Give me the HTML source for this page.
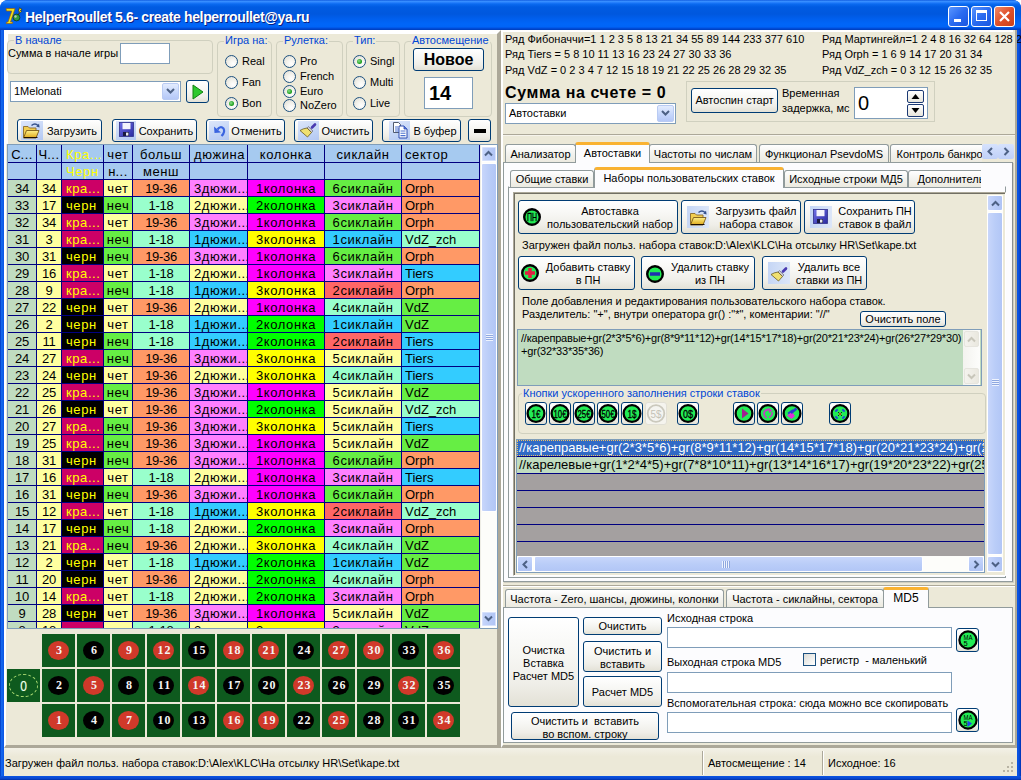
<!DOCTYPE html><html><head><meta charset="utf-8"><style>
*{box-sizing:border-box}
html,body{margin:0;padding:0}
body{width:1021px;height:780px;overflow:hidden;position:relative;background:#fff;font-family:"Liberation Sans",sans-serif;font-size:11px;color:#000}
.a{position:absolute}
.t{position:absolute;white-space:nowrap;line-height:13px}
.btn{position:absolute;border:1px solid #003C74;border-radius:3px;background:linear-gradient(#FFFFFF 0%,#F7F7F4 40%,#EFEEE8 75%,#E3E1D6 100%);text-align:center;white-space:nowrap;line-height:13px}
.edit{position:absolute;border:1px solid #7F9DB9;background:#fff}
.grp{position:absolute;border:1px solid #D0D0BF;border-radius:4px}
.gt{position:absolute;color:#0046D5;background:#ECE9D8;padding:0 1px;white-space:nowrap;line-height:13px}
.rad{position:absolute;width:13px;height:13px;border-radius:50%;border:1px solid #1C5180;background:radial-gradient(circle at 65% 70%,#fff 0%,#F4F3EE 40%,#DCDAD0 100%)}
.rad.on::after{content:"";position:absolute;left:3px;top:3px;width:5px;height:5px;border-radius:50%;background:radial-gradient(circle at 40% 40%,#8CE08C,#21A121 60%,#1A8A1A)}
.cell{position:absolute;overflow:hidden;white-space:nowrap;font-size:13px;line-height:16px;height:16px}
</style></head><body>
<div class="a" style="left:0;top:0;width:1021px;height:780px;background:#0A4FE0;border-radius:8px 8px 0 0"></div>
<div class="a" style="left:0;top:0;width:1021px;height:30px;border-radius:8px 8px 0 0;background:linear-gradient(#0048D8 0px,#3D95FF 1px,#2F86FF 2px,#0A6AF0 4px,#005BE2 7px,#0058DE 14px,#005FEE 19px,#0066F8 24px,#0064F6 27px,#0050E0 28px,#003CB8 30px)"></div>
<div class="a" style="left:0;top:30px;width:4px;height:750px;background:linear-gradient(90deg,#0036C0,#166AEE 40%,#0A55E4)"></div>
<div class="a" style="left:1017px;top:30px;width:4px;height:750px;background:linear-gradient(90deg,#0A55E4,#0A50DC 50%,#0030B0)"></div>
<div class="a" style="left:0;top:776px;width:1021px;height:4px;background:linear-gradient(#0A55E4,#0A48D0 60%,#0030A8)"></div>
<svg class="a" style="left:5px;top:7px" width="18" height="17" viewBox="0 0 18 17"><path d="M1 1.5h9l-0.5 1.8L5.5 15h2.2l-0.4 1.5H1.2l0.4-1.5h1.4L6.8 4H1.5z" fill="#F2E41A" stroke="#9A5A10" stroke-width="0.7"/><circle cx="11.5" cy="10.5" r="3.4" fill="#2E9A40" stroke="#0A2A14" stroke-width="0.7"/><circle cx="10.5" cy="9.5" r="1.2" fill="#B8C8B0"/><path d="M14.5 0.8l2.6 1.6-1.8 1 1.2 0.8-3.2 3.4 1.4-2.8-1.2-0.6z" fill="#F6EA20" stroke="#302000" stroke-width="0.6"/></svg>
<div class="t" style="left:25px;top:10px;font:bold 14px/15px 'Liberation Sans',sans-serif;letter-spacing:-0.35px;color:#fff;text-shadow:1px 1px 0 #0A1E80">HelperRoullet 5.6- create helperroullet@ya.ru</div>
<div class="a" style="left:948px;top:6px;width:21px;height:21px;border:1px solid #fff;border-radius:3px;background:linear-gradient(135deg,#5A96FF,#2A6BF0 50%,#1A56E0)">
<div class="a" style="left:5px;top:12px;width:7px;height:3px;background:#fff"></div>
</div>
<div class="a" style="left:971px;top:6px;width:21px;height:21px;border:1px solid #fff;border-radius:3px;background:linear-gradient(135deg,#5A96FF,#2A6BF0 50%,#1A56E0)">
<div class="a" style="left:4px;top:3px;width:11px;height:11px;border:1px solid #fff;border-top-width:3px"></div>
</div>
<div class="a" style="left:994px;top:6px;width:21px;height:21px;border:1px solid #fff;border-radius:3px;background:linear-gradient(135deg,#F08A6A,#E0502A 50%,#C8401A)">
<svg class="a" style="left:3px;top:3px" width="13" height="13"><path d="M2 2L11 11M11 2L2 11" stroke="#fff" stroke-width="2.2"/></svg>
</div>
<div class="a" style="left:4px;top:30px;width:1013px;height:746px;background:#ECE9D8"></div>
<div class="a" style="left:4px;top:30px;width:497px;height:718px;border-top:4px solid #fff;border-left:2px solid #fff;border-right:4px solid #ACA899;border-bottom:3px solid #ACA899"></div>
<div class="a" style="left:6px;top:34px;width:2px;height:110px;background:#fff"></div>
<div class="a" style="left:501px;top:30px;width:516px;height:718px;border-top:2px solid #fff;border-left:2px solid #fff;border-right:2px solid #ACA899;border-bottom:3px solid #ACA899"></div>
<div class="grp" style="left:7px;top:40px;width:206px;height:34px"></div>
<div class="gt" style="left:14px;top:34px">В начале</div>
<div class="t" style="left:8px;top:47px">Сумма в начале игры</div>
<div class="edit" style="left:120px;top:43px;width:50px;height:21px"></div>
<div class="edit" style="left:10px;top:81px;width:171px;height:21px">
<div class="t" style="left:3px;top:3px;font-size:11px">1Melonati</div>
<div class="a" style="right:1px;top:1px;width:17px;height:17px;border:1px solid #B9CBF3;border-radius:2px;background:linear-gradient(#E3ECFE,#C4D5FB 60%,#B5C8F7)"><svg class="a" style="left:3px;top:3px" width="9" height="8"><path d="M1 2L4.5 5.5L8 2" fill="none" stroke="#4D6185" stroke-width="2"/></svg></div>
</div>
<div class="btn" style="left:186px;top:80px;width:23px;height:23px"><svg class="a" style="left:5px;top:3px" width="12" height="16"><path d="M1 1L11 8L1 15Z" fill="#2DC82D" stroke="#108010" stroke-width="1"/></svg></div>
<div class="grp" style="left:217px;top:41px;width:55px;height:76px"></div>
<div class="gt" style="left:224px;top:34px">Игра на:</div>
<div class="rad" style="left:225px;top:55px"></div>
<div class="t" style="left:242px;top:55px">Real</div>
<div class="rad" style="left:225px;top:76px"></div>
<div class="t" style="left:242px;top:76px">Fan</div>
<div class="rad on" style="left:225px;top:97px"></div>
<div class="t" style="left:242px;top:97px">Bon</div>
<div class="grp" style="left:276px;top:41px;width:67px;height:76px"></div>
<div class="gt" style="left:283px;top:34px">Рулетка:</div>
<div class="rad" style="left:283px;top:55px"></div>
<div class="t" style="left:300px;top:55px">Pro</div>
<div class="rad" style="left:283px;top:70px"></div>
<div class="t" style="left:300px;top:70px">French</div>
<div class="rad on" style="left:283px;top:85px"></div>
<div class="t" style="left:300px;top:85px">Euro</div>
<div class="rad" style="left:283px;top:99px"></div>
<div class="t" style="left:300px;top:99px">NoZero</div>
<div class="grp" style="left:346px;top:41px;width:54px;height:76px"></div>
<div class="gt" style="left:353px;top:34px">Тип:</div>
<div class="rad on" style="left:353px;top:55px"></div>
<div class="t" style="left:370px;top:55px">Singl</div>
<div class="rad" style="left:353px;top:76px"></div>
<div class="t" style="left:370px;top:76px">Multi</div>
<div class="rad" style="left:353px;top:97px"></div>
<div class="t" style="left:370px;top:97px">Live</div>
<div class="grp" style="left:404px;top:41px;width:88px;height:76px"></div>
<div class="gt" style="left:411px;top:34px">Автосмещение</div>
<div class="btn" style="left:413px;top:48px;width:71px;height:23px;font:bold 16px/21px 'Liberation Sans',sans-serif">Новое</div>
<div class="edit" style="left:424px;top:77px;width:49px;height:32px"><div class="t" style="left:4px;top:5px;font:bold 20px/20px 'Liberation Sans',sans-serif">14</div></div>
<div class="btn" style="left:17px;top:119px;width:85px;height:23px">
<div class="a" style="left:3px;top:1px;width:22px;height:19px;background:linear-gradient(160deg,#DDE6FA,#C2D4F6 60%,#B4C8F2)"></div>
<svg class="a" style="left:3px;top:1px" width="20" height="18" viewBox="0 0 20 18"><defs><linearGradient id="fg" x1="0" y1="0" x2="0" y2="1"><stop offset="0" stop-color="#FDF08A"/><stop offset="1" stop-color="#E0A818"/></linearGradient></defs><path d="M2.5 5.5h4.5l1.5 1.5h6.5v9.5h-12.5z" fill="#F2CE50" stroke="#8A6A28" stroke-width="0.9"/><path d="M5.5 9.5h12.5l-3 7.5H2.5z" fill="url(#fg)" stroke="#7A5A18" stroke-width="0.9"/><path d="M16.5 16.5H3" stroke="#201000" stroke-width="1"/><path d="M10.5 4.5Q14 1.5 17 4.5" fill="none" stroke="#34508A" stroke-width="1.4"/><path d="M15.2 5.6L18.6 6.6L18 2.8z" fill="#34508A"/></svg>
<div class="t" style="left:26px;right:1px;text-align:center;top:5px">Загрузить</div>
</div>
<div class="btn" style="left:112px;top:119px;width:85px;height:23px">
<div class="a" style="left:3px;top:1px;width:20px;height:19px;background:linear-gradient(160deg,#DDE6FA,#C2D4F6 60%,#B4C8F2)"></div>
<svg class="a" style="left:5px;top:1px" width="18" height="18" viewBox="0 0 18 18"><defs><linearGradient id="flg" x1="0" y1="0" x2="1" y2="1"><stop offset="0" stop-color="#7070E8"/><stop offset="1" stop-color="#2A2AA0"/></linearGradient></defs><rect x="1.5" y="1.5" width="14" height="14" fill="url(#flg)" stroke="#30308A" stroke-width="0.8"/><rect x="4.5" y="2" width="8" height="6.2" fill="#F4F4FC"/><rect x="5" y="11" width="6" height="4" fill="#1A1A40"/><rect x="8" y="11.6" width="2.4" height="3" fill="#E8E8F0"/></svg>
<div class="t" style="left:24px;right:1px;text-align:center;top:5px">Сохранить</div>
</div>
<div class="btn" style="left:206px;top:119px;width:79px;height:23px">
<div class="a" style="left:2px;top:1px;width:20px;height:19px;background:linear-gradient(160deg,#DDE6FA,#C2D4F6 60%,#B4C8F2)"></div>
<svg class="a" style="left:4px;top:1px" width="18" height="18" viewBox="0 0 18 18"><path d="M6.5 8.5Q9.5 4.5 12.5 7.5Q14.5 11 10.5 15" fill="none" stroke="#3A64E0" stroke-width="2.2"/><path d="M3 5.5L3.5 12L10 11.5z" fill="#3A64E0"/></svg>
<div class="t" style="left:23px;right:1px;text-align:center;top:5px">Отменить</div>
</div>
<div class="btn" style="left:294px;top:119px;width:79px;height:23px">
<div class="a" style="left:3px;top:1px;width:21px;height:19px;background:linear-gradient(160deg,#DDE6FA,#C2D4F6 60%,#B4C8F2)"></div>
<svg class="a" style="left:3px;top:1px" width="20" height="18" viewBox="0 0 20 18"><path d="M14 6.5L17 3.5" stroke="#4A3AB0" stroke-width="2.6" stroke-linecap="round"/><path d="M10.5 5.5L15 10L13.5 11.5L9 7z" fill="#C8C8D0" stroke="#606070" stroke-width="0.6"/><path d="M9 7L13.5 11.5L9.5 16L2 9.5Q5 7.5 9 7z" fill="#F0E070" stroke="#6A5A20" stroke-width="0.8"/></svg>
<div class="t" style="left:25px;right:1px;text-align:center;top:5px">Очистить</div>
</div>
<div class="btn" style="left:382px;top:119px;width:79px;height:23px">
<div class="a" style="left:6px;top:1px;width:21px;height:19px;background:linear-gradient(160deg,#DDE6FA,#C2D4F6 60%,#B4C8F2)"></div>
<svg class="a" style="left:7px;top:1px" width="20" height="18" viewBox="0 0 20 18"><path d="M3.5 1.5h5l2 2v8h-7z" fill="#fff" stroke="#404A60" stroke-width="0.9"/><path d="M9 5h5l3 3v9H9z" fill="#fff" stroke="#2A4AB0" stroke-width="1"/><path d="M14 5v3h3" fill="#5A7AE0" stroke="#2A4AB0" stroke-width="0.8"/><path d="M5 6h3M5 8h4M5 10h4M10.5 10h5M10.5 12.3h5M10.5 14.6h5" stroke="#4A70D0" stroke-width="1.1"/></svg>
<div class="t" style="left:28px;right:1px;text-align:center;top:5px">В буфер</div>
</div>
<div class="btn" style="left:468px;top:119px;width:23px;height:23px"><div class="a" style="left:5px;top:9px;width:12px;height:4px;background:#000"></div></div>
<div class="a" style="left:7px;top:144px;width:491px;height:485px;border:1px solid #7F9DB9;background:#fff;overflow:hidden">
<div class="a" style="left:0;top:0;width:472px;height:484px;background:#000080"></div>
<div class="cell" style="left:0px;top:0px;width:28px;height:17px;background:#A6CAF0;color:#000;text-align:center;padding-top:2px;line-height:15px;letter-spacing:0px">С<span style="letter-spacing:0.5px">...</span></div>
<div class="cell" style="left:0px;top:18px;width:28px;height:16px;background:#A6CAF0;color:#000;text-align:center;padding-top:1px;line-height:15px;letter-spacing:0px"></div>
<div class="cell" style="left:29px;top:0px;width:24px;height:17px;background:#A6CAF0;color:#000;text-align:center;padding-top:2px;line-height:15px;letter-spacing:0px">Ч<span style="letter-spacing:0.5px">...</span></div>
<div class="cell" style="left:29px;top:18px;width:24px;height:16px;background:#A6CAF0;color:#000;text-align:center;padding-top:1px;line-height:15px;letter-spacing:0px"></div>
<div class="cell" style="left:54px;top:0px;width:41px;height:17px;background:#A6CAF0;color:#FFFF00;text-align:left;padding-left:4px;padding-top:2px;line-height:15px;letter-spacing:0.6px">Кра<span style="letter-spacing:0.5px">...</span></div>
<div class="cell" style="left:54px;top:18px;width:41px;height:16px;background:#A6CAF0;color:#FFFF00;text-align:left;padding-left:4px;padding-top:1px;line-height:15px;letter-spacing:0.6px">Черн</div>
<div class="cell" style="left:96px;top:0px;width:28px;height:17px;background:#A6CAF0;color:#000;text-align:center;padding-top:2px;line-height:15px;letter-spacing:0.6px">чет</div>
<div class="cell" style="left:96px;top:18px;width:28px;height:16px;background:#A6CAF0;color:#000;text-align:center;padding-top:1px;line-height:15px;letter-spacing:0px">н<span style="letter-spacing:0.5px">...</span></div>
<div class="cell" style="left:125px;top:0px;width:56px;height:17px;background:#A6CAF0;color:#000;text-align:center;padding-top:2px;line-height:15px;letter-spacing:0.6px">больш</div>
<div class="cell" style="left:125px;top:18px;width:56px;height:16px;background:#A6CAF0;color:#000;text-align:center;padding-top:1px;line-height:15px;letter-spacing:0.6px">менш</div>
<div class="cell" style="left:182px;top:0px;width:57px;height:17px;background:#A6CAF0;color:#000;text-align:left;padding-left:4px;padding-top:2px;line-height:15px;letter-spacing:0.6px">дюжина</div>
<div class="cell" style="left:182px;top:18px;width:57px;height:16px;background:#A6CAF0;color:#000;text-align:left;padding-left:4px;padding-top:1px;line-height:15px;letter-spacing:0px"></div>
<div class="cell" style="left:240px;top:0px;width:76px;height:17px;background:#A6CAF0;color:#000;text-align:center;padding-top:2px;line-height:15px;letter-spacing:0.6px">колонка</div>
<div class="cell" style="left:240px;top:18px;width:76px;height:16px;background:#A6CAF0;color:#000;text-align:center;padding-top:1px;line-height:15px;letter-spacing:0px"></div>
<div class="cell" style="left:317px;top:0px;width:76px;height:17px;background:#A6CAF0;color:#000;text-align:center;padding-top:2px;line-height:15px;letter-spacing:0.6px">сиклайн</div>
<div class="cell" style="left:317px;top:18px;width:76px;height:16px;background:#A6CAF0;color:#000;text-align:center;padding-top:1px;line-height:15px;letter-spacing:0px"></div>
<div class="cell" style="left:394px;top:0px;width:77px;height:17px;background:#A6CAF0;color:#000;text-align:left;padding-left:3px;padding-top:2px;line-height:15px;letter-spacing:0.6px">сектор</div>
<div class="cell" style="left:394px;top:18px;width:77px;height:16px;background:#A6CAF0;color:#000;text-align:left;padding-left:3px;padding-top:1px;line-height:15px;letter-spacing:0px"></div>
<div class="cell" style="left:0px;top:35px;width:28px;height:16px;background:#C0DCC0;color:#000;text-align:center;padding-top:1px;line-height:15px;letter-spacing:-0.3px">34</div>
<div class="cell" style="left:29px;top:35px;width:24px;height:16px;background:#FFFFA0;color:#000;text-align:center;padding-top:1px;line-height:15px;letter-spacing:-0.3px">34</div>
<div class="cell" style="left:54px;top:35px;width:41px;height:16px;background:#CC0066;color:#FFFF00;text-align:left;padding-left:4px;padding-top:1px;line-height:15px;letter-spacing:0.6px">кра<span style="letter-spacing:0.5px">...</span></div>
<div class="cell" style="left:96px;top:35px;width:28px;height:16px;background:#FFFFA0;color:#000;text-align:center;padding-top:1px;line-height:15px;letter-spacing:0.6px">чет</div>
<div class="cell" style="left:125px;top:35px;width:56px;height:16px;background:#FF9966;color:#000;text-align:center;padding-top:1px;line-height:15px;letter-spacing:-0.3px">19-36</div>
<div class="cell" style="left:182px;top:35px;width:57px;height:16px;background:#FF80FF;color:#000;text-align:left;padding-left:4px;padding-top:1px;line-height:15px;letter-spacing:0.6px">3дюжи<span style="letter-spacing:0.5px">...</span></div>
<div class="cell" style="left:240px;top:35px;width:76px;height:16px;background:#FF00FF;color:#000;text-align:center;padding-top:1px;line-height:15px;letter-spacing:0.6px">1колонка</div>
<div class="cell" style="left:317px;top:35px;width:76px;height:16px;background:#66EE44;color:#000;text-align:center;padding-top:1px;line-height:15px;letter-spacing:0.6px">6сиклайн</div>
<div class="cell" style="left:394px;top:35px;width:77px;height:16px;background:#FF9966;color:#000;text-align:left;padding-left:3px;padding-top:1px;line-height:15px;letter-spacing:0px">Orph</div>
<div class="cell" style="left:0px;top:52px;width:28px;height:16px;background:#C0DCC0;color:#000;text-align:center;padding-top:1px;line-height:15px;letter-spacing:-0.3px">33</div>
<div class="cell" style="left:29px;top:52px;width:24px;height:16px;background:#FFFFA0;color:#000;text-align:center;padding-top:1px;line-height:15px;letter-spacing:-0.3px">17</div>
<div class="cell" style="left:54px;top:52px;width:41px;height:16px;background:#000000;color:#FFFF00;text-align:left;padding-left:4px;padding-top:1px;line-height:15px;letter-spacing:0.6px">черн</div>
<div class="cell" style="left:96px;top:52px;width:28px;height:16px;background:#66EE44;color:#000;text-align:center;padding-top:1px;line-height:15px;letter-spacing:0.6px">неч</div>
<div class="cell" style="left:125px;top:52px;width:56px;height:16px;background:#99FFCC;color:#000;text-align:center;padding-top:1px;line-height:15px;letter-spacing:-0.3px">1-18</div>
<div class="cell" style="left:182px;top:52px;width:57px;height:16px;background:#FFFFA0;color:#000;text-align:left;padding-left:4px;padding-top:1px;line-height:15px;letter-spacing:0.6px">2дюжи<span style="letter-spacing:0.5px">...</span></div>
<div class="cell" style="left:240px;top:52px;width:76px;height:16px;background:#00FF00;color:#000;text-align:center;padding-top:1px;line-height:15px;letter-spacing:0.6px">2колонка</div>
<div class="cell" style="left:317px;top:52px;width:76px;height:16px;background:#FF80FF;color:#000;text-align:center;padding-top:1px;line-height:15px;letter-spacing:0.6px">3сиклайн</div>
<div class="cell" style="left:394px;top:52px;width:77px;height:16px;background:#FF9966;color:#000;text-align:left;padding-left:3px;padding-top:1px;line-height:15px;letter-spacing:0px">Orph</div>
<div class="cell" style="left:0px;top:69px;width:28px;height:16px;background:#C0DCC0;color:#000;text-align:center;padding-top:1px;line-height:15px;letter-spacing:-0.3px">32</div>
<div class="cell" style="left:29px;top:69px;width:24px;height:16px;background:#FFFFA0;color:#000;text-align:center;padding-top:1px;line-height:15px;letter-spacing:-0.3px">34</div>
<div class="cell" style="left:54px;top:69px;width:41px;height:16px;background:#CC0066;color:#FFFF00;text-align:left;padding-left:4px;padding-top:1px;line-height:15px;letter-spacing:0.6px">кра<span style="letter-spacing:0.5px">...</span></div>
<div class="cell" style="left:96px;top:69px;width:28px;height:16px;background:#FFFFA0;color:#000;text-align:center;padding-top:1px;line-height:15px;letter-spacing:0.6px">чет</div>
<div class="cell" style="left:125px;top:69px;width:56px;height:16px;background:#FF9966;color:#000;text-align:center;padding-top:1px;line-height:15px;letter-spacing:-0.3px">19-36</div>
<div class="cell" style="left:182px;top:69px;width:57px;height:16px;background:#FF80FF;color:#000;text-align:left;padding-left:4px;padding-top:1px;line-height:15px;letter-spacing:0.6px">3дюжи<span style="letter-spacing:0.5px">...</span></div>
<div class="cell" style="left:240px;top:69px;width:76px;height:16px;background:#FF00FF;color:#000;text-align:center;padding-top:1px;line-height:15px;letter-spacing:0.6px">1колонка</div>
<div class="cell" style="left:317px;top:69px;width:76px;height:16px;background:#66EE44;color:#000;text-align:center;padding-top:1px;line-height:15px;letter-spacing:0.6px">6сиклайн</div>
<div class="cell" style="left:394px;top:69px;width:77px;height:16px;background:#FF9966;color:#000;text-align:left;padding-left:3px;padding-top:1px;line-height:15px;letter-spacing:0px">Orph</div>
<div class="cell" style="left:0px;top:86px;width:28px;height:16px;background:#C0DCC0;color:#000;text-align:center;padding-top:1px;line-height:15px;letter-spacing:-0.3px">31</div>
<div class="cell" style="left:29px;top:86px;width:24px;height:16px;background:#FFFFA0;color:#000;text-align:center;padding-top:1px;line-height:15px;letter-spacing:-0.3px">3</div>
<div class="cell" style="left:54px;top:86px;width:41px;height:16px;background:#CC0066;color:#FFFF00;text-align:left;padding-left:4px;padding-top:1px;line-height:15px;letter-spacing:0.6px">кра<span style="letter-spacing:0.5px">...</span></div>
<div class="cell" style="left:96px;top:86px;width:28px;height:16px;background:#66EE44;color:#000;text-align:center;padding-top:1px;line-height:15px;letter-spacing:0.6px">неч</div>
<div class="cell" style="left:125px;top:86px;width:56px;height:16px;background:#99FFCC;color:#000;text-align:center;padding-top:1px;line-height:15px;letter-spacing:-0.3px">1-18</div>
<div class="cell" style="left:182px;top:86px;width:57px;height:16px;background:#33CCFF;color:#000;text-align:left;padding-left:4px;padding-top:1px;line-height:15px;letter-spacing:0.6px">1дюжи<span style="letter-spacing:0.5px">...</span></div>
<div class="cell" style="left:240px;top:86px;width:76px;height:16px;background:#FFFF00;color:#000;text-align:center;padding-top:1px;line-height:15px;letter-spacing:0.6px">3колонка</div>
<div class="cell" style="left:317px;top:86px;width:76px;height:16px;background:#33CCFF;color:#000;text-align:center;padding-top:1px;line-height:15px;letter-spacing:0.6px">1сиклайн</div>
<div class="cell" style="left:394px;top:86px;width:77px;height:16px;background:#99FFCC;color:#000;text-align:left;padding-left:3px;padding-top:1px;line-height:15px;letter-spacing:0px">VdZ_zch</div>
<div class="cell" style="left:0px;top:103px;width:28px;height:16px;background:#C0DCC0;color:#000;text-align:center;padding-top:1px;line-height:15px;letter-spacing:-0.3px">30</div>
<div class="cell" style="left:29px;top:103px;width:24px;height:16px;background:#FFFFA0;color:#000;text-align:center;padding-top:1px;line-height:15px;letter-spacing:-0.3px">31</div>
<div class="cell" style="left:54px;top:103px;width:41px;height:16px;background:#000000;color:#FFFF00;text-align:left;padding-left:4px;padding-top:1px;line-height:15px;letter-spacing:0.6px">черн</div>
<div class="cell" style="left:96px;top:103px;width:28px;height:16px;background:#66EE44;color:#000;text-align:center;padding-top:1px;line-height:15px;letter-spacing:0.6px">неч</div>
<div class="cell" style="left:125px;top:103px;width:56px;height:16px;background:#FF9966;color:#000;text-align:center;padding-top:1px;line-height:15px;letter-spacing:-0.3px">19-36</div>
<div class="cell" style="left:182px;top:103px;width:57px;height:16px;background:#FF80FF;color:#000;text-align:left;padding-left:4px;padding-top:1px;line-height:15px;letter-spacing:0.6px">3дюжи<span style="letter-spacing:0.5px">...</span></div>
<div class="cell" style="left:240px;top:103px;width:76px;height:16px;background:#FF00FF;color:#000;text-align:center;padding-top:1px;line-height:15px;letter-spacing:0.6px">1колонка</div>
<div class="cell" style="left:317px;top:103px;width:76px;height:16px;background:#66EE44;color:#000;text-align:center;padding-top:1px;line-height:15px;letter-spacing:0.6px">6сиклайн</div>
<div class="cell" style="left:394px;top:103px;width:77px;height:16px;background:#FF9966;color:#000;text-align:left;padding-left:3px;padding-top:1px;line-height:15px;letter-spacing:0px">Orph</div>
<div class="cell" style="left:0px;top:120px;width:28px;height:16px;background:#C0DCC0;color:#000;text-align:center;padding-top:1px;line-height:15px;letter-spacing:-0.3px">29</div>
<div class="cell" style="left:29px;top:120px;width:24px;height:16px;background:#FFFFA0;color:#000;text-align:center;padding-top:1px;line-height:15px;letter-spacing:-0.3px">16</div>
<div class="cell" style="left:54px;top:120px;width:41px;height:16px;background:#CC0066;color:#FFFF00;text-align:left;padding-left:4px;padding-top:1px;line-height:15px;letter-spacing:0.6px">кра<span style="letter-spacing:0.5px">...</span></div>
<div class="cell" style="left:96px;top:120px;width:28px;height:16px;background:#FFFFA0;color:#000;text-align:center;padding-top:1px;line-height:15px;letter-spacing:0.6px">чет</div>
<div class="cell" style="left:125px;top:120px;width:56px;height:16px;background:#99FFCC;color:#000;text-align:center;padding-top:1px;line-height:15px;letter-spacing:-0.3px">1-18</div>
<div class="cell" style="left:182px;top:120px;width:57px;height:16px;background:#FFFFA0;color:#000;text-align:left;padding-left:4px;padding-top:1px;line-height:15px;letter-spacing:0.6px">2дюжи<span style="letter-spacing:0.5px">...</span></div>
<div class="cell" style="left:240px;top:120px;width:76px;height:16px;background:#FF00FF;color:#000;text-align:center;padding-top:1px;line-height:15px;letter-spacing:0.6px">1колонка</div>
<div class="cell" style="left:317px;top:120px;width:76px;height:16px;background:#FF80FF;color:#000;text-align:center;padding-top:1px;line-height:15px;letter-spacing:0.6px">3сиклайн</div>
<div class="cell" style="left:394px;top:120px;width:77px;height:16px;background:#33CCFF;color:#000;text-align:left;padding-left:3px;padding-top:1px;line-height:15px;letter-spacing:0px">Tiers</div>
<div class="cell" style="left:0px;top:137px;width:28px;height:16px;background:#C0DCC0;color:#000;text-align:center;padding-top:1px;line-height:15px;letter-spacing:-0.3px">28</div>
<div class="cell" style="left:29px;top:137px;width:24px;height:16px;background:#FFFFA0;color:#000;text-align:center;padding-top:1px;line-height:15px;letter-spacing:-0.3px">9</div>
<div class="cell" style="left:54px;top:137px;width:41px;height:16px;background:#CC0066;color:#FFFF00;text-align:left;padding-left:4px;padding-top:1px;line-height:15px;letter-spacing:0.6px">кра<span style="letter-spacing:0.5px">...</span></div>
<div class="cell" style="left:96px;top:137px;width:28px;height:16px;background:#66EE44;color:#000;text-align:center;padding-top:1px;line-height:15px;letter-spacing:0.6px">неч</div>
<div class="cell" style="left:125px;top:137px;width:56px;height:16px;background:#99FFCC;color:#000;text-align:center;padding-top:1px;line-height:15px;letter-spacing:-0.3px">1-18</div>
<div class="cell" style="left:182px;top:137px;width:57px;height:16px;background:#33CCFF;color:#000;text-align:left;padding-left:4px;padding-top:1px;line-height:15px;letter-spacing:0.6px">1дюжи<span style="letter-spacing:0.5px">...</span></div>
<div class="cell" style="left:240px;top:137px;width:76px;height:16px;background:#FFFF00;color:#000;text-align:center;padding-top:1px;line-height:15px;letter-spacing:0.6px">3колонка</div>
<div class="cell" style="left:317px;top:137px;width:76px;height:16px;background:#FF6666;color:#000;text-align:center;padding-top:1px;line-height:15px;letter-spacing:0.6px">2сиклайн</div>
<div class="cell" style="left:394px;top:137px;width:77px;height:16px;background:#FF9966;color:#000;text-align:left;padding-left:3px;padding-top:1px;line-height:15px;letter-spacing:0px">Orph</div>
<div class="cell" style="left:0px;top:154px;width:28px;height:16px;background:#C0DCC0;color:#000;text-align:center;padding-top:1px;line-height:15px;letter-spacing:-0.3px">27</div>
<div class="cell" style="left:29px;top:154px;width:24px;height:16px;background:#FFFFA0;color:#000;text-align:center;padding-top:1px;line-height:15px;letter-spacing:-0.3px">22</div>
<div class="cell" style="left:54px;top:154px;width:41px;height:16px;background:#000000;color:#FFFF00;text-align:left;padding-left:4px;padding-top:1px;line-height:15px;letter-spacing:0.6px">черн</div>
<div class="cell" style="left:96px;top:154px;width:28px;height:16px;background:#FFFFA0;color:#000;text-align:center;padding-top:1px;line-height:15px;letter-spacing:0.6px">чет</div>
<div class="cell" style="left:125px;top:154px;width:56px;height:16px;background:#FF9966;color:#000;text-align:center;padding-top:1px;line-height:15px;letter-spacing:-0.3px">19-36</div>
<div class="cell" style="left:182px;top:154px;width:57px;height:16px;background:#FFFFA0;color:#000;text-align:left;padding-left:4px;padding-top:1px;line-height:15px;letter-spacing:0.6px">2дюжи<span style="letter-spacing:0.5px">...</span></div>
<div class="cell" style="left:240px;top:154px;width:76px;height:16px;background:#FF00FF;color:#000;text-align:center;padding-top:1px;line-height:15px;letter-spacing:0.6px">1колонка</div>
<div class="cell" style="left:317px;top:154px;width:76px;height:16px;background:#99FFCC;color:#000;text-align:center;padding-top:1px;line-height:15px;letter-spacing:0.6px">4сиклайн</div>
<div class="cell" style="left:394px;top:154px;width:77px;height:16px;background:#66EE44;color:#000;text-align:left;padding-left:3px;padding-top:1px;line-height:15px;letter-spacing:0px">VdZ</div>
<div class="cell" style="left:0px;top:171px;width:28px;height:16px;background:#C0DCC0;color:#000;text-align:center;padding-top:1px;line-height:15px;letter-spacing:-0.3px">26</div>
<div class="cell" style="left:29px;top:171px;width:24px;height:16px;background:#FFFFA0;color:#000;text-align:center;padding-top:1px;line-height:15px;letter-spacing:-0.3px">2</div>
<div class="cell" style="left:54px;top:171px;width:41px;height:16px;background:#000000;color:#FFFF00;text-align:left;padding-left:4px;padding-top:1px;line-height:15px;letter-spacing:0.6px">черн</div>
<div class="cell" style="left:96px;top:171px;width:28px;height:16px;background:#FFFFA0;color:#000;text-align:center;padding-top:1px;line-height:15px;letter-spacing:0.6px">чет</div>
<div class="cell" style="left:125px;top:171px;width:56px;height:16px;background:#99FFCC;color:#000;text-align:center;padding-top:1px;line-height:15px;letter-spacing:-0.3px">1-18</div>
<div class="cell" style="left:182px;top:171px;width:57px;height:16px;background:#33CCFF;color:#000;text-align:left;padding-left:4px;padding-top:1px;line-height:15px;letter-spacing:0.6px">1дюжи<span style="letter-spacing:0.5px">...</span></div>
<div class="cell" style="left:240px;top:171px;width:76px;height:16px;background:#00FF00;color:#000;text-align:center;padding-top:1px;line-height:15px;letter-spacing:0.6px">2колонка</div>
<div class="cell" style="left:317px;top:171px;width:76px;height:16px;background:#33CCFF;color:#000;text-align:center;padding-top:1px;line-height:15px;letter-spacing:0.6px">1сиклайн</div>
<div class="cell" style="left:394px;top:171px;width:77px;height:16px;background:#66EE44;color:#000;text-align:left;padding-left:3px;padding-top:1px;line-height:15px;letter-spacing:0px">VdZ</div>
<div class="cell" style="left:0px;top:188px;width:28px;height:16px;background:#C0DCC0;color:#000;text-align:center;padding-top:1px;line-height:15px;letter-spacing:-0.3px">25</div>
<div class="cell" style="left:29px;top:188px;width:24px;height:16px;background:#FFFFA0;color:#000;text-align:center;padding-top:1px;line-height:15px;letter-spacing:-0.3px">11</div>
<div class="cell" style="left:54px;top:188px;width:41px;height:16px;background:#000000;color:#FFFF00;text-align:left;padding-left:4px;padding-top:1px;line-height:15px;letter-spacing:0.6px">черн</div>
<div class="cell" style="left:96px;top:188px;width:28px;height:16px;background:#66EE44;color:#000;text-align:center;padding-top:1px;line-height:15px;letter-spacing:0.6px">неч</div>
<div class="cell" style="left:125px;top:188px;width:56px;height:16px;background:#99FFCC;color:#000;text-align:center;padding-top:1px;line-height:15px;letter-spacing:-0.3px">1-18</div>
<div class="cell" style="left:182px;top:188px;width:57px;height:16px;background:#33CCFF;color:#000;text-align:left;padding-left:4px;padding-top:1px;line-height:15px;letter-spacing:0.6px">1дюжи<span style="letter-spacing:0.5px">...</span></div>
<div class="cell" style="left:240px;top:188px;width:76px;height:16px;background:#00FF00;color:#000;text-align:center;padding-top:1px;line-height:15px;letter-spacing:0.6px">2колонка</div>
<div class="cell" style="left:317px;top:188px;width:76px;height:16px;background:#FF6666;color:#000;text-align:center;padding-top:1px;line-height:15px;letter-spacing:0.6px">2сиклайн</div>
<div class="cell" style="left:394px;top:188px;width:77px;height:16px;background:#33CCFF;color:#000;text-align:left;padding-left:3px;padding-top:1px;line-height:15px;letter-spacing:0px">Tiers</div>
<div class="cell" style="left:0px;top:205px;width:28px;height:16px;background:#C0DCC0;color:#000;text-align:center;padding-top:1px;line-height:15px;letter-spacing:-0.3px">24</div>
<div class="cell" style="left:29px;top:205px;width:24px;height:16px;background:#FFFFA0;color:#000;text-align:center;padding-top:1px;line-height:15px;letter-spacing:-0.3px">27</div>
<div class="cell" style="left:54px;top:205px;width:41px;height:16px;background:#CC0066;color:#FFFF00;text-align:left;padding-left:4px;padding-top:1px;line-height:15px;letter-spacing:0.6px">кра<span style="letter-spacing:0.5px">...</span></div>
<div class="cell" style="left:96px;top:205px;width:28px;height:16px;background:#66EE44;color:#000;text-align:center;padding-top:1px;line-height:15px;letter-spacing:0.6px">неч</div>
<div class="cell" style="left:125px;top:205px;width:56px;height:16px;background:#FF9966;color:#000;text-align:center;padding-top:1px;line-height:15px;letter-spacing:-0.3px">19-36</div>
<div class="cell" style="left:182px;top:205px;width:57px;height:16px;background:#FF80FF;color:#000;text-align:left;padding-left:4px;padding-top:1px;line-height:15px;letter-spacing:0.6px">3дюжи<span style="letter-spacing:0.5px">...</span></div>
<div class="cell" style="left:240px;top:205px;width:76px;height:16px;background:#FFFF00;color:#000;text-align:center;padding-top:1px;line-height:15px;letter-spacing:0.6px">3колонка</div>
<div class="cell" style="left:317px;top:205px;width:76px;height:16px;background:#FFFFA0;color:#000;text-align:center;padding-top:1px;line-height:15px;letter-spacing:0.6px">5сиклайн</div>
<div class="cell" style="left:394px;top:205px;width:77px;height:16px;background:#33CCFF;color:#000;text-align:left;padding-left:3px;padding-top:1px;line-height:15px;letter-spacing:0px">Tiers</div>
<div class="cell" style="left:0px;top:222px;width:28px;height:16px;background:#C0DCC0;color:#000;text-align:center;padding-top:1px;line-height:15px;letter-spacing:-0.3px">23</div>
<div class="cell" style="left:29px;top:222px;width:24px;height:16px;background:#FFFFA0;color:#000;text-align:center;padding-top:1px;line-height:15px;letter-spacing:-0.3px">24</div>
<div class="cell" style="left:54px;top:222px;width:41px;height:16px;background:#000000;color:#FFFF00;text-align:left;padding-left:4px;padding-top:1px;line-height:15px;letter-spacing:0.6px">черн</div>
<div class="cell" style="left:96px;top:222px;width:28px;height:16px;background:#FFFFA0;color:#000;text-align:center;padding-top:1px;line-height:15px;letter-spacing:0.6px">чет</div>
<div class="cell" style="left:125px;top:222px;width:56px;height:16px;background:#FF9966;color:#000;text-align:center;padding-top:1px;line-height:15px;letter-spacing:-0.3px">19-36</div>
<div class="cell" style="left:182px;top:222px;width:57px;height:16px;background:#FFFFA0;color:#000;text-align:left;padding-left:4px;padding-top:1px;line-height:15px;letter-spacing:0.6px">2дюжи<span style="letter-spacing:0.5px">...</span></div>
<div class="cell" style="left:240px;top:222px;width:76px;height:16px;background:#FFFF00;color:#000;text-align:center;padding-top:1px;line-height:15px;letter-spacing:0.6px">3колонка</div>
<div class="cell" style="left:317px;top:222px;width:76px;height:16px;background:#99FFCC;color:#000;text-align:center;padding-top:1px;line-height:15px;letter-spacing:0.6px">4сиклайн</div>
<div class="cell" style="left:394px;top:222px;width:77px;height:16px;background:#33CCFF;color:#000;text-align:left;padding-left:3px;padding-top:1px;line-height:15px;letter-spacing:0px">Tiers</div>
<div class="cell" style="left:0px;top:239px;width:28px;height:16px;background:#C0DCC0;color:#000;text-align:center;padding-top:1px;line-height:15px;letter-spacing:-0.3px">22</div>
<div class="cell" style="left:29px;top:239px;width:24px;height:16px;background:#FFFFA0;color:#000;text-align:center;padding-top:1px;line-height:15px;letter-spacing:-0.3px">25</div>
<div class="cell" style="left:54px;top:239px;width:41px;height:16px;background:#CC0066;color:#FFFF00;text-align:left;padding-left:4px;padding-top:1px;line-height:15px;letter-spacing:0.6px">кра<span style="letter-spacing:0.5px">...</span></div>
<div class="cell" style="left:96px;top:239px;width:28px;height:16px;background:#66EE44;color:#000;text-align:center;padding-top:1px;line-height:15px;letter-spacing:0.6px">неч</div>
<div class="cell" style="left:125px;top:239px;width:56px;height:16px;background:#FF9966;color:#000;text-align:center;padding-top:1px;line-height:15px;letter-spacing:-0.3px">19-36</div>
<div class="cell" style="left:182px;top:239px;width:57px;height:16px;background:#FF80FF;color:#000;text-align:left;padding-left:4px;padding-top:1px;line-height:15px;letter-spacing:0.6px">3дюжи<span style="letter-spacing:0.5px">...</span></div>
<div class="cell" style="left:240px;top:239px;width:76px;height:16px;background:#FF00FF;color:#000;text-align:center;padding-top:1px;line-height:15px;letter-spacing:0.6px">1колонка</div>
<div class="cell" style="left:317px;top:239px;width:76px;height:16px;background:#FFFFA0;color:#000;text-align:center;padding-top:1px;line-height:15px;letter-spacing:0.6px">5сиклайн</div>
<div class="cell" style="left:394px;top:239px;width:77px;height:16px;background:#66EE44;color:#000;text-align:left;padding-left:3px;padding-top:1px;line-height:15px;letter-spacing:0px">VdZ</div>
<div class="cell" style="left:0px;top:256px;width:28px;height:16px;background:#C0DCC0;color:#000;text-align:center;padding-top:1px;line-height:15px;letter-spacing:-0.3px">21</div>
<div class="cell" style="left:29px;top:256px;width:24px;height:16px;background:#FFFFA0;color:#000;text-align:center;padding-top:1px;line-height:15px;letter-spacing:-0.3px">26</div>
<div class="cell" style="left:54px;top:256px;width:41px;height:16px;background:#000000;color:#FFFF00;text-align:left;padding-left:4px;padding-top:1px;line-height:15px;letter-spacing:0.6px">черн</div>
<div class="cell" style="left:96px;top:256px;width:28px;height:16px;background:#FFFFA0;color:#000;text-align:center;padding-top:1px;line-height:15px;letter-spacing:0.6px">чет</div>
<div class="cell" style="left:125px;top:256px;width:56px;height:16px;background:#FF9966;color:#000;text-align:center;padding-top:1px;line-height:15px;letter-spacing:-0.3px">19-36</div>
<div class="cell" style="left:182px;top:256px;width:57px;height:16px;background:#FF80FF;color:#000;text-align:left;padding-left:4px;padding-top:1px;line-height:15px;letter-spacing:0.6px">3дюжи<span style="letter-spacing:0.5px">...</span></div>
<div class="cell" style="left:240px;top:256px;width:76px;height:16px;background:#00FF00;color:#000;text-align:center;padding-top:1px;line-height:15px;letter-spacing:0.6px">2колонка</div>
<div class="cell" style="left:317px;top:256px;width:76px;height:16px;background:#FFFFA0;color:#000;text-align:center;padding-top:1px;line-height:15px;letter-spacing:0.6px">5сиклайн</div>
<div class="cell" style="left:394px;top:256px;width:77px;height:16px;background:#99FFCC;color:#000;text-align:left;padding-left:3px;padding-top:1px;line-height:15px;letter-spacing:0px">VdZ_zch</div>
<div class="cell" style="left:0px;top:273px;width:28px;height:16px;background:#C0DCC0;color:#000;text-align:center;padding-top:1px;line-height:15px;letter-spacing:-0.3px">20</div>
<div class="cell" style="left:29px;top:273px;width:24px;height:16px;background:#FFFFA0;color:#000;text-align:center;padding-top:1px;line-height:15px;letter-spacing:-0.3px">27</div>
<div class="cell" style="left:54px;top:273px;width:41px;height:16px;background:#CC0066;color:#FFFF00;text-align:left;padding-left:4px;padding-top:1px;line-height:15px;letter-spacing:0.6px">кра<span style="letter-spacing:0.5px">...</span></div>
<div class="cell" style="left:96px;top:273px;width:28px;height:16px;background:#66EE44;color:#000;text-align:center;padding-top:1px;line-height:15px;letter-spacing:0.6px">неч</div>
<div class="cell" style="left:125px;top:273px;width:56px;height:16px;background:#FF9966;color:#000;text-align:center;padding-top:1px;line-height:15px;letter-spacing:-0.3px">19-36</div>
<div class="cell" style="left:182px;top:273px;width:57px;height:16px;background:#FF80FF;color:#000;text-align:left;padding-left:4px;padding-top:1px;line-height:15px;letter-spacing:0.6px">3дюжи<span style="letter-spacing:0.5px">...</span></div>
<div class="cell" style="left:240px;top:273px;width:76px;height:16px;background:#FFFF00;color:#000;text-align:center;padding-top:1px;line-height:15px;letter-spacing:0.6px">3колонка</div>
<div class="cell" style="left:317px;top:273px;width:76px;height:16px;background:#FFFFA0;color:#000;text-align:center;padding-top:1px;line-height:15px;letter-spacing:0.6px">5сиклайн</div>
<div class="cell" style="left:394px;top:273px;width:77px;height:16px;background:#33CCFF;color:#000;text-align:left;padding-left:3px;padding-top:1px;line-height:15px;letter-spacing:0px">Tiers</div>
<div class="cell" style="left:0px;top:290px;width:28px;height:16px;background:#C0DCC0;color:#000;text-align:center;padding-top:1px;line-height:15px;letter-spacing:-0.3px">19</div>
<div class="cell" style="left:29px;top:290px;width:24px;height:16px;background:#FFFFA0;color:#000;text-align:center;padding-top:1px;line-height:15px;letter-spacing:-0.3px">25</div>
<div class="cell" style="left:54px;top:290px;width:41px;height:16px;background:#CC0066;color:#FFFF00;text-align:left;padding-left:4px;padding-top:1px;line-height:15px;letter-spacing:0.6px">кра<span style="letter-spacing:0.5px">...</span></div>
<div class="cell" style="left:96px;top:290px;width:28px;height:16px;background:#66EE44;color:#000;text-align:center;padding-top:1px;line-height:15px;letter-spacing:0.6px">неч</div>
<div class="cell" style="left:125px;top:290px;width:56px;height:16px;background:#FF9966;color:#000;text-align:center;padding-top:1px;line-height:15px;letter-spacing:-0.3px">19-36</div>
<div class="cell" style="left:182px;top:290px;width:57px;height:16px;background:#FF80FF;color:#000;text-align:left;padding-left:4px;padding-top:1px;line-height:15px;letter-spacing:0.6px">3дюжи<span style="letter-spacing:0.5px">...</span></div>
<div class="cell" style="left:240px;top:290px;width:76px;height:16px;background:#FF00FF;color:#000;text-align:center;padding-top:1px;line-height:15px;letter-spacing:0.6px">1колонка</div>
<div class="cell" style="left:317px;top:290px;width:76px;height:16px;background:#FFFFA0;color:#000;text-align:center;padding-top:1px;line-height:15px;letter-spacing:0.6px">5сиклайн</div>
<div class="cell" style="left:394px;top:290px;width:77px;height:16px;background:#66EE44;color:#000;text-align:left;padding-left:3px;padding-top:1px;line-height:15px;letter-spacing:0px">VdZ</div>
<div class="cell" style="left:0px;top:307px;width:28px;height:16px;background:#C0DCC0;color:#000;text-align:center;padding-top:1px;line-height:15px;letter-spacing:-0.3px">18</div>
<div class="cell" style="left:29px;top:307px;width:24px;height:16px;background:#FFFFA0;color:#000;text-align:center;padding-top:1px;line-height:15px;letter-spacing:-0.3px">31</div>
<div class="cell" style="left:54px;top:307px;width:41px;height:16px;background:#000000;color:#FFFF00;text-align:left;padding-left:4px;padding-top:1px;line-height:15px;letter-spacing:0.6px">черн</div>
<div class="cell" style="left:96px;top:307px;width:28px;height:16px;background:#66EE44;color:#000;text-align:center;padding-top:1px;line-height:15px;letter-spacing:0.6px">неч</div>
<div class="cell" style="left:125px;top:307px;width:56px;height:16px;background:#FF9966;color:#000;text-align:center;padding-top:1px;line-height:15px;letter-spacing:-0.3px">19-36</div>
<div class="cell" style="left:182px;top:307px;width:57px;height:16px;background:#FF80FF;color:#000;text-align:left;padding-left:4px;padding-top:1px;line-height:15px;letter-spacing:0.6px">3дюжи<span style="letter-spacing:0.5px">...</span></div>
<div class="cell" style="left:240px;top:307px;width:76px;height:16px;background:#FF00FF;color:#000;text-align:center;padding-top:1px;line-height:15px;letter-spacing:0.6px">1колонка</div>
<div class="cell" style="left:317px;top:307px;width:76px;height:16px;background:#66EE44;color:#000;text-align:center;padding-top:1px;line-height:15px;letter-spacing:0.6px">6сиклайн</div>
<div class="cell" style="left:394px;top:307px;width:77px;height:16px;background:#FF9966;color:#000;text-align:left;padding-left:3px;padding-top:1px;line-height:15px;letter-spacing:0px">Orph</div>
<div class="cell" style="left:0px;top:324px;width:28px;height:16px;background:#C0DCC0;color:#000;text-align:center;padding-top:1px;line-height:15px;letter-spacing:-0.3px">17</div>
<div class="cell" style="left:29px;top:324px;width:24px;height:16px;background:#FFFFA0;color:#000;text-align:center;padding-top:1px;line-height:15px;letter-spacing:-0.3px">16</div>
<div class="cell" style="left:54px;top:324px;width:41px;height:16px;background:#CC0066;color:#FFFF00;text-align:left;padding-left:4px;padding-top:1px;line-height:15px;letter-spacing:0.6px">кра<span style="letter-spacing:0.5px">...</span></div>
<div class="cell" style="left:96px;top:324px;width:28px;height:16px;background:#FFFFA0;color:#000;text-align:center;padding-top:1px;line-height:15px;letter-spacing:0.6px">чет</div>
<div class="cell" style="left:125px;top:324px;width:56px;height:16px;background:#99FFCC;color:#000;text-align:center;padding-top:1px;line-height:15px;letter-spacing:-0.3px">1-18</div>
<div class="cell" style="left:182px;top:324px;width:57px;height:16px;background:#FFFFA0;color:#000;text-align:left;padding-left:4px;padding-top:1px;line-height:15px;letter-spacing:0.6px">2дюжи<span style="letter-spacing:0.5px">...</span></div>
<div class="cell" style="left:240px;top:324px;width:76px;height:16px;background:#FF00FF;color:#000;text-align:center;padding-top:1px;line-height:15px;letter-spacing:0.6px">1колонка</div>
<div class="cell" style="left:317px;top:324px;width:76px;height:16px;background:#FF80FF;color:#000;text-align:center;padding-top:1px;line-height:15px;letter-spacing:0.6px">3сиклайн</div>
<div class="cell" style="left:394px;top:324px;width:77px;height:16px;background:#33CCFF;color:#000;text-align:left;padding-left:3px;padding-top:1px;line-height:15px;letter-spacing:0px">Tiers</div>
<div class="cell" style="left:0px;top:341px;width:28px;height:16px;background:#C0DCC0;color:#000;text-align:center;padding-top:1px;line-height:15px;letter-spacing:-0.3px">16</div>
<div class="cell" style="left:29px;top:341px;width:24px;height:16px;background:#FFFFA0;color:#000;text-align:center;padding-top:1px;line-height:15px;letter-spacing:-0.3px">31</div>
<div class="cell" style="left:54px;top:341px;width:41px;height:16px;background:#000000;color:#FFFF00;text-align:left;padding-left:4px;padding-top:1px;line-height:15px;letter-spacing:0.6px">черн</div>
<div class="cell" style="left:96px;top:341px;width:28px;height:16px;background:#66EE44;color:#000;text-align:center;padding-top:1px;line-height:15px;letter-spacing:0.6px">неч</div>
<div class="cell" style="left:125px;top:341px;width:56px;height:16px;background:#FF9966;color:#000;text-align:center;padding-top:1px;line-height:15px;letter-spacing:-0.3px">19-36</div>
<div class="cell" style="left:182px;top:341px;width:57px;height:16px;background:#FF80FF;color:#000;text-align:left;padding-left:4px;padding-top:1px;line-height:15px;letter-spacing:0.6px">3дюжи<span style="letter-spacing:0.5px">...</span></div>
<div class="cell" style="left:240px;top:341px;width:76px;height:16px;background:#FF00FF;color:#000;text-align:center;padding-top:1px;line-height:15px;letter-spacing:0.6px">1колонка</div>
<div class="cell" style="left:317px;top:341px;width:76px;height:16px;background:#66EE44;color:#000;text-align:center;padding-top:1px;line-height:15px;letter-spacing:0.6px">6сиклайн</div>
<div class="cell" style="left:394px;top:341px;width:77px;height:16px;background:#FF9966;color:#000;text-align:left;padding-left:3px;padding-top:1px;line-height:15px;letter-spacing:0px">Orph</div>
<div class="cell" style="left:0px;top:358px;width:28px;height:16px;background:#C0DCC0;color:#000;text-align:center;padding-top:1px;line-height:15px;letter-spacing:-0.3px">15</div>
<div class="cell" style="left:29px;top:358px;width:24px;height:16px;background:#FFFFA0;color:#000;text-align:center;padding-top:1px;line-height:15px;letter-spacing:-0.3px">12</div>
<div class="cell" style="left:54px;top:358px;width:41px;height:16px;background:#CC0066;color:#FFFF00;text-align:left;padding-left:4px;padding-top:1px;line-height:15px;letter-spacing:0.6px">кра<span style="letter-spacing:0.5px">...</span></div>
<div class="cell" style="left:96px;top:358px;width:28px;height:16px;background:#FFFFA0;color:#000;text-align:center;padding-top:1px;line-height:15px;letter-spacing:0.6px">чет</div>
<div class="cell" style="left:125px;top:358px;width:56px;height:16px;background:#99FFCC;color:#000;text-align:center;padding-top:1px;line-height:15px;letter-spacing:-0.3px">1-18</div>
<div class="cell" style="left:182px;top:358px;width:57px;height:16px;background:#33CCFF;color:#000;text-align:left;padding-left:4px;padding-top:1px;line-height:15px;letter-spacing:0.6px">1дюжи<span style="letter-spacing:0.5px">...</span></div>
<div class="cell" style="left:240px;top:358px;width:76px;height:16px;background:#FFFF00;color:#000;text-align:center;padding-top:1px;line-height:15px;letter-spacing:0.6px">3колонка</div>
<div class="cell" style="left:317px;top:358px;width:76px;height:16px;background:#FF6666;color:#000;text-align:center;padding-top:1px;line-height:15px;letter-spacing:0.6px">2сиклайн</div>
<div class="cell" style="left:394px;top:358px;width:77px;height:16px;background:#99FFCC;color:#000;text-align:left;padding-left:3px;padding-top:1px;line-height:15px;letter-spacing:0px">VdZ_zch</div>
<div class="cell" style="left:0px;top:375px;width:28px;height:16px;background:#C0DCC0;color:#000;text-align:center;padding-top:1px;line-height:15px;letter-spacing:-0.3px">14</div>
<div class="cell" style="left:29px;top:375px;width:24px;height:16px;background:#FFFFA0;color:#000;text-align:center;padding-top:1px;line-height:15px;letter-spacing:-0.3px">17</div>
<div class="cell" style="left:54px;top:375px;width:41px;height:16px;background:#000000;color:#FFFF00;text-align:left;padding-left:4px;padding-top:1px;line-height:15px;letter-spacing:0.6px">черн</div>
<div class="cell" style="left:96px;top:375px;width:28px;height:16px;background:#66EE44;color:#000;text-align:center;padding-top:1px;line-height:15px;letter-spacing:0.6px">неч</div>
<div class="cell" style="left:125px;top:375px;width:56px;height:16px;background:#99FFCC;color:#000;text-align:center;padding-top:1px;line-height:15px;letter-spacing:-0.3px">1-18</div>
<div class="cell" style="left:182px;top:375px;width:57px;height:16px;background:#FFFFA0;color:#000;text-align:left;padding-left:4px;padding-top:1px;line-height:15px;letter-spacing:0.6px">2дюжи<span style="letter-spacing:0.5px">...</span></div>
<div class="cell" style="left:240px;top:375px;width:76px;height:16px;background:#00FF00;color:#000;text-align:center;padding-top:1px;line-height:15px;letter-spacing:0.6px">2колонка</div>
<div class="cell" style="left:317px;top:375px;width:76px;height:16px;background:#FF80FF;color:#000;text-align:center;padding-top:1px;line-height:15px;letter-spacing:0.6px">3сиклайн</div>
<div class="cell" style="left:394px;top:375px;width:77px;height:16px;background:#FF9966;color:#000;text-align:left;padding-left:3px;padding-top:1px;line-height:15px;letter-spacing:0px">Orph</div>
<div class="cell" style="left:0px;top:392px;width:28px;height:16px;background:#C0DCC0;color:#000;text-align:center;padding-top:1px;line-height:15px;letter-spacing:-0.3px">13</div>
<div class="cell" style="left:29px;top:392px;width:24px;height:16px;background:#FFFFA0;color:#000;text-align:center;padding-top:1px;line-height:15px;letter-spacing:-0.3px">21</div>
<div class="cell" style="left:54px;top:392px;width:41px;height:16px;background:#CC0066;color:#FFFF00;text-align:left;padding-left:4px;padding-top:1px;line-height:15px;letter-spacing:0.6px">кра<span style="letter-spacing:0.5px">...</span></div>
<div class="cell" style="left:96px;top:392px;width:28px;height:16px;background:#66EE44;color:#000;text-align:center;padding-top:1px;line-height:15px;letter-spacing:0.6px">неч</div>
<div class="cell" style="left:125px;top:392px;width:56px;height:16px;background:#FF9966;color:#000;text-align:center;padding-top:1px;line-height:15px;letter-spacing:-0.3px">19-36</div>
<div class="cell" style="left:182px;top:392px;width:57px;height:16px;background:#FFFFA0;color:#000;text-align:left;padding-left:4px;padding-top:1px;line-height:15px;letter-spacing:0.6px">2дюжи<span style="letter-spacing:0.5px">...</span></div>
<div class="cell" style="left:240px;top:392px;width:76px;height:16px;background:#FFFF00;color:#000;text-align:center;padding-top:1px;line-height:15px;letter-spacing:0.6px">3колонка</div>
<div class="cell" style="left:317px;top:392px;width:76px;height:16px;background:#99FFCC;color:#000;text-align:center;padding-top:1px;line-height:15px;letter-spacing:0.6px">4сиклайн</div>
<div class="cell" style="left:394px;top:392px;width:77px;height:16px;background:#66EE44;color:#000;text-align:left;padding-left:3px;padding-top:1px;line-height:15px;letter-spacing:0px">VdZ</div>
<div class="cell" style="left:0px;top:409px;width:28px;height:16px;background:#C0DCC0;color:#000;text-align:center;padding-top:1px;line-height:15px;letter-spacing:-0.3px">12</div>
<div class="cell" style="left:29px;top:409px;width:24px;height:16px;background:#FFFFA0;color:#000;text-align:center;padding-top:1px;line-height:15px;letter-spacing:-0.3px">2</div>
<div class="cell" style="left:54px;top:409px;width:41px;height:16px;background:#000000;color:#FFFF00;text-align:left;padding-left:4px;padding-top:1px;line-height:15px;letter-spacing:0.6px">черн</div>
<div class="cell" style="left:96px;top:409px;width:28px;height:16px;background:#FFFFA0;color:#000;text-align:center;padding-top:1px;line-height:15px;letter-spacing:0.6px">чет</div>
<div class="cell" style="left:125px;top:409px;width:56px;height:16px;background:#99FFCC;color:#000;text-align:center;padding-top:1px;line-height:15px;letter-spacing:-0.3px">1-18</div>
<div class="cell" style="left:182px;top:409px;width:57px;height:16px;background:#33CCFF;color:#000;text-align:left;padding-left:4px;padding-top:1px;line-height:15px;letter-spacing:0.6px">1дюжи<span style="letter-spacing:0.5px">...</span></div>
<div class="cell" style="left:240px;top:409px;width:76px;height:16px;background:#00FF00;color:#000;text-align:center;padding-top:1px;line-height:15px;letter-spacing:0.6px">2колонка</div>
<div class="cell" style="left:317px;top:409px;width:76px;height:16px;background:#33CCFF;color:#000;text-align:center;padding-top:1px;line-height:15px;letter-spacing:0.6px">1сиклайн</div>
<div class="cell" style="left:394px;top:409px;width:77px;height:16px;background:#66EE44;color:#000;text-align:left;padding-left:3px;padding-top:1px;line-height:15px;letter-spacing:0px">VdZ</div>
<div class="cell" style="left:0px;top:426px;width:28px;height:16px;background:#C0DCC0;color:#000;text-align:center;padding-top:1px;line-height:15px;letter-spacing:-0.3px">11</div>
<div class="cell" style="left:29px;top:426px;width:24px;height:16px;background:#FFFFA0;color:#000;text-align:center;padding-top:1px;line-height:15px;letter-spacing:-0.3px">20</div>
<div class="cell" style="left:54px;top:426px;width:41px;height:16px;background:#000000;color:#FFFF00;text-align:left;padding-left:4px;padding-top:1px;line-height:15px;letter-spacing:0.6px">черн</div>
<div class="cell" style="left:96px;top:426px;width:28px;height:16px;background:#FFFFA0;color:#000;text-align:center;padding-top:1px;line-height:15px;letter-spacing:0.6px">чет</div>
<div class="cell" style="left:125px;top:426px;width:56px;height:16px;background:#FF9966;color:#000;text-align:center;padding-top:1px;line-height:15px;letter-spacing:-0.3px">19-36</div>
<div class="cell" style="left:182px;top:426px;width:57px;height:16px;background:#FFFFA0;color:#000;text-align:left;padding-left:4px;padding-top:1px;line-height:15px;letter-spacing:0.6px">2дюжи<span style="letter-spacing:0.5px">...</span></div>
<div class="cell" style="left:240px;top:426px;width:76px;height:16px;background:#00FF00;color:#000;text-align:center;padding-top:1px;line-height:15px;letter-spacing:0.6px">2колонка</div>
<div class="cell" style="left:317px;top:426px;width:76px;height:16px;background:#99FFCC;color:#000;text-align:center;padding-top:1px;line-height:15px;letter-spacing:0.6px">4сиклайн</div>
<div class="cell" style="left:394px;top:426px;width:77px;height:16px;background:#FF9966;color:#000;text-align:left;padding-left:3px;padding-top:1px;line-height:15px;letter-spacing:0px">Orph</div>
<div class="cell" style="left:0px;top:443px;width:28px;height:16px;background:#C0DCC0;color:#000;text-align:center;padding-top:1px;line-height:15px;letter-spacing:-0.3px">10</div>
<div class="cell" style="left:29px;top:443px;width:24px;height:16px;background:#FFFFA0;color:#000;text-align:center;padding-top:1px;line-height:15px;letter-spacing:-0.3px">14</div>
<div class="cell" style="left:54px;top:443px;width:41px;height:16px;background:#CC0066;color:#FFFF00;text-align:left;padding-left:4px;padding-top:1px;line-height:15px;letter-spacing:0.6px">кра<span style="letter-spacing:0.5px">...</span></div>
<div class="cell" style="left:96px;top:443px;width:28px;height:16px;background:#FFFFA0;color:#000;text-align:center;padding-top:1px;line-height:15px;letter-spacing:0.6px">чет</div>
<div class="cell" style="left:125px;top:443px;width:56px;height:16px;background:#99FFCC;color:#000;text-align:center;padding-top:1px;line-height:15px;letter-spacing:-0.3px">1-18</div>
<div class="cell" style="left:182px;top:443px;width:57px;height:16px;background:#FFFFA0;color:#000;text-align:left;padding-left:4px;padding-top:1px;line-height:15px;letter-spacing:0.6px">2дюжи<span style="letter-spacing:0.5px">...</span></div>
<div class="cell" style="left:240px;top:443px;width:76px;height:16px;background:#00FF00;color:#000;text-align:center;padding-top:1px;line-height:15px;letter-spacing:0.6px">2колонка</div>
<div class="cell" style="left:317px;top:443px;width:76px;height:16px;background:#FF80FF;color:#000;text-align:center;padding-top:1px;line-height:15px;letter-spacing:0.6px">3сиклайн</div>
<div class="cell" style="left:394px;top:443px;width:77px;height:16px;background:#FF9966;color:#000;text-align:left;padding-left:3px;padding-top:1px;line-height:15px;letter-spacing:0px">Orph</div>
<div class="cell" style="left:0px;top:460px;width:28px;height:16px;background:#C0DCC0;color:#000;text-align:center;padding-top:1px;line-height:15px;letter-spacing:-0.3px">9</div>
<div class="cell" style="left:29px;top:460px;width:24px;height:16px;background:#FFFFA0;color:#000;text-align:center;padding-top:1px;line-height:15px;letter-spacing:-0.3px">28</div>
<div class="cell" style="left:54px;top:460px;width:41px;height:16px;background:#000000;color:#FFFF00;text-align:left;padding-left:4px;padding-top:1px;line-height:15px;letter-spacing:0.6px">черн</div>
<div class="cell" style="left:96px;top:460px;width:28px;height:16px;background:#FFFFA0;color:#000;text-align:center;padding-top:1px;line-height:15px;letter-spacing:0.6px">чет</div>
<div class="cell" style="left:125px;top:460px;width:56px;height:16px;background:#FF9966;color:#000;text-align:center;padding-top:1px;line-height:15px;letter-spacing:-0.3px">19-36</div>
<div class="cell" style="left:182px;top:460px;width:57px;height:16px;background:#FF80FF;color:#000;text-align:left;padding-left:4px;padding-top:1px;line-height:15px;letter-spacing:0.6px">3дюжи<span style="letter-spacing:0.5px">...</span></div>
<div class="cell" style="left:240px;top:460px;width:76px;height:16px;background:#FF00FF;color:#000;text-align:center;padding-top:1px;line-height:15px;letter-spacing:0.6px">1колонка</div>
<div class="cell" style="left:317px;top:460px;width:76px;height:16px;background:#FFFFA0;color:#000;text-align:center;padding-top:1px;line-height:15px;letter-spacing:0.6px">5сиклайн</div>
<div class="cell" style="left:394px;top:460px;width:77px;height:16px;background:#66EE44;color:#000;text-align:left;padding-left:3px;padding-top:1px;line-height:15px;letter-spacing:0px">VdZ</div>
<div class="cell" style="left:0px;top:477px;width:28px;height:16px;background:#C0DCC0;color:#000;text-align:center;padding-top:1px;line-height:15px;letter-spacing:-0.3px">8</div>
<div class="cell" style="left:29px;top:477px;width:24px;height:16px;background:#FFFFA0;color:#000;text-align:center;padding-top:1px;line-height:15px;letter-spacing:-0.3px">18</div>
<div class="cell" style="left:54px;top:477px;width:41px;height:16px;background:#CC0066;color:#FFFF00;text-align:left;padding-left:4px;padding-top:1px;line-height:15px;letter-spacing:0.6px">кра<span style="letter-spacing:0.5px">...</span></div>
<div class="cell" style="left:96px;top:477px;width:28px;height:16px;background:#FFFFA0;color:#000;text-align:center;padding-top:1px;line-height:15px;letter-spacing:0.6px">чет</div>
<div class="cell" style="left:125px;top:477px;width:56px;height:16px;background:#99FFCC;color:#000;text-align:center;padding-top:1px;line-height:15px;letter-spacing:-0.3px">1-18</div>
<div class="cell" style="left:182px;top:477px;width:57px;height:16px;background:#FFFFA0;color:#000;text-align:left;padding-left:4px;padding-top:1px;line-height:15px;letter-spacing:0.6px">2дюжи<span style="letter-spacing:0.5px">...</span></div>
<div class="cell" style="left:240px;top:477px;width:76px;height:16px;background:#FFFF00;color:#000;text-align:center;padding-top:1px;line-height:15px;letter-spacing:0.6px">3колонка</div>
<div class="cell" style="left:317px;top:477px;width:76px;height:16px;background:#FF80FF;color:#000;text-align:center;padding-top:1px;line-height:15px;letter-spacing:0.6px">3сиклайн</div>
<div class="cell" style="left:394px;top:477px;width:77px;height:16px;background:#66EE44;color:#000;text-align:left;padding-left:3px;padding-top:1px;line-height:15px;letter-spacing:0px">VdZ</div>
<div class="a" style="left:472px;top:0;width:17px;height:483px;background:#FDFDFA;border-left:1px solid #EEEDE5"></div>
<div class="a" style="left:473px;top:1px;width:16px;height:16px;border:1px solid #fff;border-radius:2px;background:linear-gradient(90deg,#C8D6FB,#B9CCF8 50%,#B0C4F5);box-shadow:inset 0 0 0 1px #D6E1FC"><svg class="a" style="left:2px;top:3px" width="9" height="7"><path d="M1 5.5L4.5 2L8 5.5" fill="none" stroke="#4D6185" stroke-width="2"/></svg></div>
<div class="a" style="left:473px;top:18px;width:16px;height:349px;border:1px solid #fff;border-radius:2px;background:linear-gradient(90deg,#C8D6FB,#BACDF8 50%,#B2C6F6)"><div class="a" style="left:4px;top:170px;width:7px;height:7px;background:repeating-linear-gradient(#EEF3FE 0 1px,#8FA8E0 1px 2px)"></div></div>
<div class="a" style="left:473px;top:466px;width:16px;height:16px;border:1px solid #fff;border-radius:2px;background:linear-gradient(90deg,#C8D6FB,#B9CCF8 50%,#B0C4F5);box-shadow:inset 0 0 0 1px #D6E1FC"><svg class="a" style="left:2px;top:3px" width="9" height="7"><path d="M1 1.5L4.5 5L8 1.5" fill="none" stroke="#4D6185" stroke-width="2"/></svg></div>
</div>
<div class="a" style="left:7px;top:669px;width:33px;height:33px;background:#0E5A1E"><div class="a" style="left:2px;top:5px;width:29px;height:23px;border:1px dashed #A8D870;border-radius:50%"></div><div class="t" style="left:0;width:33px;text-align:center;top:9px;font:15px/15px 'Liberation Sans',sans-serif;color:#F0FFF0;transform:scaleX(0.8);text-shadow:0 0 1px #60B060">0</div></div>
<div class="a" style="left:42px;top:634px;width:33px;height:33px;background:#0E5A1E"><div class="a" style="left:6px;top:7px;width:21px;height:19px;border-radius:50%;background:#D0392A"></div><div class="t" style="left:1px;top:9px;width:33px;text-align:center;font:bold 12px/14px 'Liberation Serif',serif;color:#F4F4F4;letter-spacing:1px">3</div></div>
<div class="a" style="left:42px;top:669px;width:33px;height:33px;background:#0E5A1E"><div class="a" style="left:6px;top:7px;width:21px;height:19px;border-radius:50%;background:#000"></div><div class="t" style="left:1px;top:9px;width:33px;text-align:center;font:bold 12px/14px 'Liberation Serif',serif;color:#F4F4F4;letter-spacing:1px">2</div></div>
<div class="a" style="left:42px;top:704px;width:33px;height:33px;background:#0E5A1E"><div class="a" style="left:6px;top:7px;width:21px;height:19px;border-radius:50%;background:#D0392A"></div><div class="t" style="left:1px;top:9px;width:33px;text-align:center;font:bold 12px/14px 'Liberation Serif',serif;color:#F4F4F4;letter-spacing:1px">1</div></div>
<div class="a" style="left:77px;top:634px;width:33px;height:33px;background:#0E5A1E"><div class="a" style="left:6px;top:7px;width:21px;height:19px;border-radius:50%;background:#000"></div><div class="t" style="left:1px;top:9px;width:33px;text-align:center;font:bold 12px/14px 'Liberation Serif',serif;color:#F4F4F4;letter-spacing:1px">6</div></div>
<div class="a" style="left:77px;top:669px;width:33px;height:33px;background:#0E5A1E"><div class="a" style="left:6px;top:7px;width:21px;height:19px;border-radius:50%;background:#D0392A"></div><div class="t" style="left:1px;top:9px;width:33px;text-align:center;font:bold 12px/14px 'Liberation Serif',serif;color:#F4F4F4;letter-spacing:1px">5</div></div>
<div class="a" style="left:77px;top:704px;width:33px;height:33px;background:#0E5A1E"><div class="a" style="left:6px;top:7px;width:21px;height:19px;border-radius:50%;background:#000"></div><div class="t" style="left:1px;top:9px;width:33px;text-align:center;font:bold 12px/14px 'Liberation Serif',serif;color:#F4F4F4;letter-spacing:1px">4</div></div>
<div class="a" style="left:112px;top:634px;width:33px;height:33px;background:#0E5A1E"><div class="a" style="left:6px;top:7px;width:21px;height:19px;border-radius:50%;background:#D0392A"></div><div class="t" style="left:1px;top:9px;width:33px;text-align:center;font:bold 12px/14px 'Liberation Serif',serif;color:#F4F4F4;letter-spacing:1px">9</div></div>
<div class="a" style="left:112px;top:669px;width:33px;height:33px;background:#0E5A1E"><div class="a" style="left:6px;top:7px;width:21px;height:19px;border-radius:50%;background:#000"></div><div class="t" style="left:1px;top:9px;width:33px;text-align:center;font:bold 12px/14px 'Liberation Serif',serif;color:#F4F4F4;letter-spacing:1px">8</div></div>
<div class="a" style="left:112px;top:704px;width:33px;height:33px;background:#0E5A1E"><div class="a" style="left:6px;top:7px;width:21px;height:19px;border-radius:50%;background:#D0392A"></div><div class="t" style="left:1px;top:9px;width:33px;text-align:center;font:bold 12px/14px 'Liberation Serif',serif;color:#F4F4F4;letter-spacing:1px">7</div></div>
<div class="a" style="left:147px;top:634px;width:33px;height:33px;background:#0E5A1E"><div class="a" style="left:6px;top:7px;width:21px;height:19px;border-radius:50%;background:#D0392A"></div><div class="t" style="left:1px;top:9px;width:33px;text-align:center;font:bold 12px/14px 'Liberation Serif',serif;color:#F4F4F4;letter-spacing:1px">12</div></div>
<div class="a" style="left:147px;top:669px;width:33px;height:33px;background:#0E5A1E"><div class="a" style="left:6px;top:7px;width:21px;height:19px;border-radius:50%;background:#000"></div><div class="t" style="left:1px;top:9px;width:33px;text-align:center;font:bold 12px/14px 'Liberation Serif',serif;color:#F4F4F4;letter-spacing:1px">11</div></div>
<div class="a" style="left:147px;top:704px;width:33px;height:33px;background:#0E5A1E"><div class="a" style="left:6px;top:7px;width:21px;height:19px;border-radius:50%;background:#000"></div><div class="t" style="left:1px;top:9px;width:33px;text-align:center;font:bold 12px/14px 'Liberation Serif',serif;color:#F4F4F4;letter-spacing:1px">10</div></div>
<div class="a" style="left:182px;top:634px;width:33px;height:33px;background:#0E5A1E"><div class="a" style="left:6px;top:7px;width:21px;height:19px;border-radius:50%;background:#000"></div><div class="t" style="left:1px;top:9px;width:33px;text-align:center;font:bold 12px/14px 'Liberation Serif',serif;color:#F4F4F4;letter-spacing:1px">15</div></div>
<div class="a" style="left:182px;top:669px;width:33px;height:33px;background:#0E5A1E"><div class="a" style="left:6px;top:7px;width:21px;height:19px;border-radius:50%;background:#D0392A"></div><div class="t" style="left:1px;top:9px;width:33px;text-align:center;font:bold 12px/14px 'Liberation Serif',serif;color:#F4F4F4;letter-spacing:1px">14</div></div>
<div class="a" style="left:182px;top:704px;width:33px;height:33px;background:#0E5A1E"><div class="a" style="left:6px;top:7px;width:21px;height:19px;border-radius:50%;background:#000"></div><div class="t" style="left:1px;top:9px;width:33px;text-align:center;font:bold 12px/14px 'Liberation Serif',serif;color:#F4F4F4;letter-spacing:1px">13</div></div>
<div class="a" style="left:217px;top:634px;width:33px;height:33px;background:#0E5A1E"><div class="a" style="left:6px;top:7px;width:21px;height:19px;border-radius:50%;background:#D0392A"></div><div class="t" style="left:1px;top:9px;width:33px;text-align:center;font:bold 12px/14px 'Liberation Serif',serif;color:#F4F4F4;letter-spacing:1px">18</div></div>
<div class="a" style="left:217px;top:669px;width:33px;height:33px;background:#0E5A1E"><div class="a" style="left:6px;top:7px;width:21px;height:19px;border-radius:50%;background:#000"></div><div class="t" style="left:1px;top:9px;width:33px;text-align:center;font:bold 12px/14px 'Liberation Serif',serif;color:#F4F4F4;letter-spacing:1px">17</div></div>
<div class="a" style="left:217px;top:704px;width:33px;height:33px;background:#0E5A1E"><div class="a" style="left:6px;top:7px;width:21px;height:19px;border-radius:50%;background:#D0392A"></div><div class="t" style="left:1px;top:9px;width:33px;text-align:center;font:bold 12px/14px 'Liberation Serif',serif;color:#F4F4F4;letter-spacing:1px">16</div></div>
<div class="a" style="left:252px;top:634px;width:33px;height:33px;background:#0E5A1E"><div class="a" style="left:6px;top:7px;width:21px;height:19px;border-radius:50%;background:#D0392A"></div><div class="t" style="left:1px;top:9px;width:33px;text-align:center;font:bold 12px/14px 'Liberation Serif',serif;color:#F4F4F4;letter-spacing:1px">21</div></div>
<div class="a" style="left:252px;top:669px;width:33px;height:33px;background:#0E5A1E"><div class="a" style="left:6px;top:7px;width:21px;height:19px;border-radius:50%;background:#000"></div><div class="t" style="left:1px;top:9px;width:33px;text-align:center;font:bold 12px/14px 'Liberation Serif',serif;color:#F4F4F4;letter-spacing:1px">20</div></div>
<div class="a" style="left:252px;top:704px;width:33px;height:33px;background:#0E5A1E"><div class="a" style="left:6px;top:7px;width:21px;height:19px;border-radius:50%;background:#D0392A"></div><div class="t" style="left:1px;top:9px;width:33px;text-align:center;font:bold 12px/14px 'Liberation Serif',serif;color:#F4F4F4;letter-spacing:1px">19</div></div>
<div class="a" style="left:287px;top:634px;width:33px;height:33px;background:#0E5A1E"><div class="a" style="left:6px;top:7px;width:21px;height:19px;border-radius:50%;background:#000"></div><div class="t" style="left:1px;top:9px;width:33px;text-align:center;font:bold 12px/14px 'Liberation Serif',serif;color:#F4F4F4;letter-spacing:1px">24</div></div>
<div class="a" style="left:287px;top:669px;width:33px;height:33px;background:#0E5A1E"><div class="a" style="left:6px;top:7px;width:21px;height:19px;border-radius:50%;background:#D0392A"></div><div class="t" style="left:1px;top:9px;width:33px;text-align:center;font:bold 12px/14px 'Liberation Serif',serif;color:#F4F4F4;letter-spacing:1px">23</div></div>
<div class="a" style="left:287px;top:704px;width:33px;height:33px;background:#0E5A1E"><div class="a" style="left:6px;top:7px;width:21px;height:19px;border-radius:50%;background:#000"></div><div class="t" style="left:1px;top:9px;width:33px;text-align:center;font:bold 12px/14px 'Liberation Serif',serif;color:#F4F4F4;letter-spacing:1px">22</div></div>
<div class="a" style="left:322px;top:634px;width:33px;height:33px;background:#0E5A1E"><div class="a" style="left:6px;top:7px;width:21px;height:19px;border-radius:50%;background:#D0392A"></div><div class="t" style="left:1px;top:9px;width:33px;text-align:center;font:bold 12px/14px 'Liberation Serif',serif;color:#F4F4F4;letter-spacing:1px">27</div></div>
<div class="a" style="left:322px;top:669px;width:33px;height:33px;background:#0E5A1E"><div class="a" style="left:6px;top:7px;width:21px;height:19px;border-radius:50%;background:#000"></div><div class="t" style="left:1px;top:9px;width:33px;text-align:center;font:bold 12px/14px 'Liberation Serif',serif;color:#F4F4F4;letter-spacing:1px">26</div></div>
<div class="a" style="left:322px;top:704px;width:33px;height:33px;background:#0E5A1E"><div class="a" style="left:6px;top:7px;width:21px;height:19px;border-radius:50%;background:#D0392A"></div><div class="t" style="left:1px;top:9px;width:33px;text-align:center;font:bold 12px/14px 'Liberation Serif',serif;color:#F4F4F4;letter-spacing:1px">25</div></div>
<div class="a" style="left:357px;top:634px;width:33px;height:33px;background:#0E5A1E"><div class="a" style="left:6px;top:7px;width:21px;height:19px;border-radius:50%;background:#D0392A"></div><div class="t" style="left:1px;top:9px;width:33px;text-align:center;font:bold 12px/14px 'Liberation Serif',serif;color:#F4F4F4;letter-spacing:1px">30</div></div>
<div class="a" style="left:357px;top:669px;width:33px;height:33px;background:#0E5A1E"><div class="a" style="left:6px;top:7px;width:21px;height:19px;border-radius:50%;background:#000"></div><div class="t" style="left:1px;top:9px;width:33px;text-align:center;font:bold 12px/14px 'Liberation Serif',serif;color:#F4F4F4;letter-spacing:1px">29</div></div>
<div class="a" style="left:357px;top:704px;width:33px;height:33px;background:#0E5A1E"><div class="a" style="left:6px;top:7px;width:21px;height:19px;border-radius:50%;background:#000"></div><div class="t" style="left:1px;top:9px;width:33px;text-align:center;font:bold 12px/14px 'Liberation Serif',serif;color:#F4F4F4;letter-spacing:1px">28</div></div>
<div class="a" style="left:392px;top:634px;width:33px;height:33px;background:#0E5A1E"><div class="a" style="left:6px;top:7px;width:21px;height:19px;border-radius:50%;background:#000"></div><div class="t" style="left:1px;top:9px;width:33px;text-align:center;font:bold 12px/14px 'Liberation Serif',serif;color:#F4F4F4;letter-spacing:1px">33</div></div>
<div class="a" style="left:392px;top:669px;width:33px;height:33px;background:#0E5A1E"><div class="a" style="left:6px;top:7px;width:21px;height:19px;border-radius:50%;background:#D0392A"></div><div class="t" style="left:1px;top:9px;width:33px;text-align:center;font:bold 12px/14px 'Liberation Serif',serif;color:#F4F4F4;letter-spacing:1px">32</div></div>
<div class="a" style="left:392px;top:704px;width:33px;height:33px;background:#0E5A1E"><div class="a" style="left:6px;top:7px;width:21px;height:19px;border-radius:50%;background:#000"></div><div class="t" style="left:1px;top:9px;width:33px;text-align:center;font:bold 12px/14px 'Liberation Serif',serif;color:#F4F4F4;letter-spacing:1px">31</div></div>
<div class="a" style="left:427px;top:634px;width:33px;height:33px;background:#0E5A1E"><div class="a" style="left:6px;top:7px;width:21px;height:19px;border-radius:50%;background:#D0392A"></div><div class="t" style="left:1px;top:9px;width:33px;text-align:center;font:bold 12px/14px 'Liberation Serif',serif;color:#F4F4F4;letter-spacing:1px">36</div></div>
<div class="a" style="left:427px;top:669px;width:33px;height:33px;background:#0E5A1E"><div class="a" style="left:6px;top:7px;width:21px;height:19px;border-radius:50%;background:#000"></div><div class="t" style="left:1px;top:9px;width:33px;text-align:center;font:bold 12px/14px 'Liberation Serif',serif;color:#F4F4F4;letter-spacing:1px">35</div></div>
<div class="a" style="left:427px;top:704px;width:33px;height:33px;background:#0E5A1E"><div class="a" style="left:6px;top:7px;width:21px;height:19px;border-radius:50%;background:#D0392A"></div><div class="t" style="left:1px;top:9px;width:33px;text-align:center;font:bold 12px/14px 'Liberation Serif',serif;color:#F4F4F4;letter-spacing:1px">34</div></div>
<div class="a" style="left:4px;top:748px;width:1013px;height:28px;background:linear-gradient(#F3F1E7,#ECE9D8 30%)"></div>
<div class="t" style="left:5px;top:757px">Загружен файл польз. набора ставок:D:\Alex\KLC\На отсылку HR\Set\kape.txt</div>
<div class="a" style="left:702px;top:751px;width:2px;height:24px;border-left:1px solid #ACA899;border-right:1px solid #fff"></div>
<div class="a" style="left:822px;top:751px;width:2px;height:24px;border-left:1px solid #ACA899;border-right:1px solid #fff"></div>
<div class="t" style="left:708px;top:757px">Автосмещение : 14</div>
<div class="t" style="left:828px;top:757px">Исходное: 16</div>
<svg class="a" style="left:1003px;top:762px" width="12" height="12"><rect x="8" y="0" width="2" height="2" fill="#B8B4A4"/><rect x="4" y="4" width="2" height="2" fill="#B8B4A4"/><rect x="8" y="4" width="2" height="2" fill="#B8B4A4"/><rect x="0" y="8" width="2" height="2" fill="#B8B4A4"/><rect x="4" y="8" width="2" height="2" fill="#B8B4A4"/><rect x="8" y="8" width="2" height="2" fill="#B8B4A4"/></svg>
<div class="t" style="left:505px;top:33px">Ряд Фибоначчи=1 1 2 3 5 8 13 21 34 55 89 144 233 377 610</div>
<div class="t" style="left:505px;top:48px">Ряд Tiers = 5 8 10 11 13 16 23 24 27 30 33 36</div>
<div class="t" style="left:505px;top:64px">Ряд VdZ = 0 2 3 4 7 12 15 18 19 21 22 25 26 28 29 32 35</div>
<div class="t" style="left:822px;top:33px">Ряд Мартингейл=1 2 4 8 16 32 64 128 256</div>
<div class="t" style="left:822px;top:48px">Ряд Orph = 1 6 9 14 17 20 31 34</div>
<div class="t" style="left:822px;top:64px">Ряд VdZ_zch = 0 3 12 15 26 32 35</div>
<div class="a" style="left:1013px;top:30px;width:4px;height:60px;background:#ECE9D8"></div>
<div class="a" style="left:1015px;top:30px;width:2px;height:718px;background:#ACA899"></div>
<div class="t" style="left:505px;top:83px;font:bold 16px/19px 'Liberation Sans',sans-serif;letter-spacing:0.6px">Сумма на счете = 0</div>
<div class="edit" style="left:505px;top:103px;width:171px;height:21px">
<div class="t" style="left:3px;top:3px;font-size:11px">Автоставки</div>
<div class="a" style="right:1px;top:1px;width:17px;height:17px;border:1px solid #B9CBF3;border-radius:2px;background:linear-gradient(#E3ECFE,#C4D5FB 60%,#B5C8F7)"><svg class="a" style="left:3px;top:3px" width="9" height="8"><path d="M1 2L4.5 5.5L8 2" fill="none" stroke="#4D6185" stroke-width="2"/></svg></div>
</div>
<div class="grp" style="left:686px;top:81px;width:249px;height:41px;border-radius:0;border-color:#D0D0BF"></div>
<div class="btn" style="left:691px;top:88px;width:87px;height:25px;line-height:23px">Автоспин старт</div>
<div class="t" style="left:782px;top:86px;line-height:15px">Временная<br>задержка, мс</div>
<div class="edit" style="left:854px;top:87px;width:74px;height:32px"><div class="t" style="left:3px;top:5px;font:20px/20px 'Liberation Sans',sans-serif">0</div></div>
<div class="a" style="left:907px;top:90px;width:17px;height:13px;border:1px solid #1C3A74;border-radius:2px;background:linear-gradient(#FFFFFF,#E8E6DC)"><svg class="a" style="left:3px;top:2px" width="9" height="7"><path d="M4.5 1L8.5 6H0.5Z" fill="#000"/></svg></div>
<div class="a" style="left:907px;top:104px;width:17px;height:13px;border:1px solid #1C3A74;border-radius:2px;background:linear-gradient(#FFFFFF,#E8E6DC)"><svg class="a" style="left:3px;top:2px" width="9" height="7"><path d="M0.5 1H8.5L4.5 6Z" fill="#000"/></svg></div>
<div class="a" style="left:503px;top:134px;width:512px;height:1px;background:#ACA899"></div>
<div class="a" style="left:503px;top:135px;width:512px;height:1px;background:#F6F4EC"></div>
<div class="a" style="left:503px;top:162px;width:510px;height:420px;background:#FCFCFE;border:1px solid #919B9C;border-right-color:#8A8F8F;box-shadow:1px 1px 0 #D0CEC0"></div>
<div class="a" style="left:505px;top:144px;width:71px;height:18px;background:linear-gradient(#FFFFFF,#F3F3EF 50%,#ECEAE0);border:1px solid #919B9C;border-bottom:none;border-radius:3px 3px 0 0;overflow:hidden"><div class="t" style="left:0;width:100%;text-align:center;top:3px;font-size:11px">Анализатор</div></div>
<div class="a" style="left:649px;top:144px;width:108px;height:18px;background:linear-gradient(#FFFFFF,#F3F3EF 50%,#ECEAE0);border:1px solid #919B9C;border-bottom:none;border-radius:3px 3px 0 0;overflow:hidden"><div class="t" style="left:0;width:100%;text-align:center;top:3px;font-size:11px">Частоты по числам</div></div>
<div class="a" style="left:759px;top:144px;width:130px;height:18px;background:linear-gradient(#FFFFFF,#F3F3EF 50%,#ECEAE0);border:1px solid #919B9C;border-bottom:none;border-radius:3px 3px 0 0;overflow:hidden"><div class="t" style="left:0;width:100%;text-align:center;top:3px;font-size:11px">Функционал PsevdoMS</div></div>
<div class="a" style="left:890px;top:144px;width:92px;height:19px;overflow:hidden">
<div class="a" style="left:0px;top:0px;width:118px;height:18px;background:linear-gradient(#FFFFFF,#F3F3EF 50%,#ECEAE0);border:1px solid #919B9C;border-bottom:none;border-radius:3px 3px 0 0;overflow:hidden"><div class="t" style="left:0;width:100%;text-align:center;top:3px;font-size:11px">Контроль банкролла</div></div>
</div>
<div class="a" style="left:575px;top:142px;width:75px;height:21px;background:#FCFCFE;border:1px solid #919B9C;border-bottom:none;border-radius:3px 3px 0 0;border-top:3px solid #F9B232;z-index:2"><div class="t" style="left:0;width:100%;text-align:center;top:2px;font-size:11px">Автоставки</div></div>
<div class="a" style="left:982px;top:144px;width:32px;height:15px;display:flex;gap:0">
<div class="a" style="left:0px;top:0;width:16px;height:15px;border-radius:2px;background:linear-gradient(#D6E2FD,#BFD0F8)"><svg class="a" style="left:5px;top:3px" width="7" height="9"><path d="M5 1L1.5 4.5L5 8" fill="none" stroke="#4D6185" stroke-width="2"/></svg></div>
<div class="a" style="left:16px;top:0;width:16px;height:15px;border-radius:2px;background:linear-gradient(#D6E2FD,#BFD0F8)"><svg class="a" style="left:5px;top:3px" width="7" height="9"><path d="M1.5 1L5 4.5L1.5 8" fill="none" stroke="#4D6185" stroke-width="2"/></svg></div>
</div>
<div class="a" style="left:508px;top:186px;width:498px;height:392px;background:#FCFCFE;border:1px solid #919B9C;border-top-color:#FCFCFE"></div><div class="a" style="left:508px;top:187px;width:473px;height:1px;background:#919B9C;z-index:1"></div>
<div class="a" style="left:510px;top:170px;width:84px;height:17px;background:linear-gradient(#FFFFFF,#F3F3EF 50%,#ECEAE0);border:1px solid #919B9C;border-bottom:none;border-radius:3px 3px 0 0;overflow:hidden"><div class="t" style="left:0;width:100%;text-align:center;top:2px;font-size:11px">Общие ставки</div></div>
<div class="a" style="left:784px;top:170px;width:124px;height:17px;background:linear-gradient(#FFFFFF,#F3F3EF 50%,#ECEAE0);border:1px solid #919B9C;border-bottom:none;border-radius:3px 3px 0 0;overflow:hidden"><div class="t" style="left:0;width:100%;text-align:center;top:2px;font-size:11px">Исходные строки МД5</div></div>
<div class="a" style="left:908px;top:170px;width:73px;height:17px;overflow:hidden">
<div class="a" style="left:0px;top:0px;width:98px;height:17px;background:linear-gradient(#FFFFFF,#F3F3EF 50%,#ECEAE0);border:1px solid #919B9C;border-bottom:none;border-radius:3px 3px 0 0;overflow:hidden"><div class="t" style="left:0;width:100%;text-align:center;top:2px;font-size:11px">Дополнительно</div></div>
</div>
<div class="a" style="left:594px;top:167px;width:190px;height:21px;background:#FCFCFE;border:1px solid #919B9C;border-bottom:none;border-radius:3px 3px 0 0;border-top:3px solid #F9B232;z-index:2"><div class="t" style="left:0;width:100%;text-align:center;top:2px;font-size:11px">Наборы пользовательских ставок</div></div>
<div class="a" style="left:513px;top:192px;width:493px;height:384px;border:1px solid #ACA899;border-right-color:#fff;border-bottom-color:#fff;box-shadow:inset 1px 1px 0 #716F64;background:#ECE9D8"></div>
<div class="a" style="left:987px;top:195px;width:16px;height:377px;background:#FDFDFA"></div>
<div class="a" style="left:987px;top:195px;width:16px;height:16px;border:1px solid #fff;border-radius:2px;background:linear-gradient(90deg,#C8D6FB,#B9CCF8 50%,#B0C4F5)"><svg class="a" style="left:3px;top:4px" width="9" height="7"><path d="M1 5.5L4.5 2L8 5.5" fill="none" stroke="#4D6185" stroke-width="2"/></svg></div>
<div class="a" style="left:987px;top:212px;width:16px;height:343px;border:1px solid #fff;border-radius:2px;background:linear-gradient(90deg,#C8D6FB,#BACDF8 50%,#B2C6F6)"><div class="a" style="left:4px;top:166px;width:7px;height:7px;background:repeating-linear-gradient(#EEF3FE 0 1px,#8FA8E0 1px 2px)"></div></div>
<div class="a" style="left:987px;top:556px;width:16px;height:16px;border:1px solid #fff;border-radius:2px;background:linear-gradient(90deg,#C8D6FB,#B9CCF8 50%,#B0C4F5)"><svg class="a" style="left:3px;top:4px" width="9" height="7"><path d="M1 1.5L4.5 5L8 1.5" fill="none" stroke="#4D6185" stroke-width="2"/></svg></div>
<div class="btn" style="left:518px;top:200px;width:160px;height:34px;line-height:15px;padding-top:1px"><svg class="a" style="left:4px;top:7px" width="18" height="18" viewBox="0 0 18 18"><circle cx="9" cy="9" r="7.8" fill="#22EC55" stroke="#000" stroke-width="2.4"/><text x="9" y="13" text-anchor="middle" font-family="Liberation Sans" font-size="10.5" textLength="10" lengthAdjust="spacingAndGlyphs" fill="#000" stroke="#000" stroke-width="0.35">ПН</text></svg><div class="t" style="left:24px;width:134px;top:4px;text-align:center;line-height:13px">Автоставка<br>пользовательский набор</div></div>
<div class="btn" style="left:681px;top:200px;width:120px;height:34px"><div class="a" style="left:5px;top:5px;width:22px;height:22px;background:linear-gradient(90deg,#C5D6F5,#DCE6F8)"></div><svg class="a" style="left:6px;top:7px" width="20" height="18" viewBox="0 0 20 18"><defs><linearGradient id="fg" x1="0" y1="0" x2="0" y2="1"><stop offset="0" stop-color="#FDF08A"/><stop offset="1" stop-color="#E0A818"/></linearGradient></defs><path d="M2.5 5.5h4.5l1.5 1.5h6.5v9.5h-12.5z" fill="#F2CE50" stroke="#8A6A28" stroke-width="0.9"/><path d="M5.5 9.5h12.5l-3 7.5H2.5z" fill="url(#fg)" stroke="#7A5A18" stroke-width="0.9"/><path d="M16.5 16.5H3" stroke="#201000" stroke-width="1"/><path d="M10.5 4.5Q14 1.5 17 4.5" fill="none" stroke="#34508A" stroke-width="1.4"/><path d="M15.2 5.6L18.6 6.6L18 2.8z" fill="#34508A"/></svg><div class="t" style="left:30px;width:88px;top:4px;text-align:center;line-height:13px">Загрузить файл<br>набора ставок</div></div>
<div class="btn" style="left:804px;top:200px;width:111px;height:34px"><div class="a" style="left:5px;top:5px;width:22px;height:22px;background:linear-gradient(90deg,#C5D6F5,#DCE6F8)"></div><svg class="a" style="left:7px;top:7px" width="18" height="18" viewBox="0 0 18 18"><defs><linearGradient id="flg" x1="0" y1="0" x2="1" y2="1"><stop offset="0" stop-color="#7070E8"/><stop offset="1" stop-color="#2A2AA0"/></linearGradient></defs><rect x="1.5" y="1.5" width="14" height="14" fill="url(#flg)" stroke="#30308A" stroke-width="0.8"/><rect x="4.5" y="2" width="8" height="6.2" fill="#F4F4FC"/><rect x="5" y="11" width="6" height="4" fill="#1A1A40"/><rect x="8" y="11.6" width="2.4" height="3" fill="#E8E8F0"/></svg><div class="t" style="left:30px;width:80px;top:4px;text-align:center;line-height:13px">Сохранить ПН<br>ставок в файл</div></div>
<div class="t" style="left:522px;top:239px">Загружен файл польз. набора ставок:D:\Alex\KLC\На отсылку HR\Set\kape.txt</div>
<div class="btn" style="left:518px;top:256px;width:117px;height:34px"><svg class="a" style="left:2px;top:7px" width="18" height="18" viewBox="0 0 18 18"><circle cx="9" cy="9" r="7.8" fill="#22EC55" stroke="#000" stroke-width="2.4"/><path d="M9 4v10M4 9h10" stroke="#E02040" stroke-width="3.5"/></svg><div class="t" style="left:24px;width:90px;top:4px;text-align:center;line-height:13px">Добавить ставку<br>в ПН</div></div>
<div class="btn" style="left:641px;top:256px;width:114px;height:34px"><svg class="a" style="left:4px;top:8px" width="18" height="18" viewBox="0 0 18 18"><circle cx="9" cy="9" r="7.8" fill="#22EC55" stroke="#000" stroke-width="2.4"/><path d="M4 9h10" stroke="#2030B0" stroke-width="3.5"/></svg><div class="t" style="left:24px;width:88px;top:4px;text-align:center;line-height:13px">Удалить ставку<br>из ПН</div></div>
<div class="btn" style="left:762px;top:256px;width:105px;height:34px"><div class="a" style="left:5px;top:5px;width:22px;height:22px;background:linear-gradient(90deg,#C5D6F5,#DCE6F8)"></div><svg class="a" style="left:6px;top:8px" width="20" height="18" viewBox="0 0 20 18"><path d="M14 6.5L17 3.5" stroke="#4A3AB0" stroke-width="2.6" stroke-linecap="round"/><path d="M10.5 5.5L15 10L13.5 11.5L9 7z" fill="#C8C8D0" stroke="#606070" stroke-width="0.6"/><path d="M9 7L13.5 11.5L9.5 16L2 9.5Q5 7.5 9 7z" fill="#F0E070" stroke="#6A5A20" stroke-width="0.8"/></svg><div class="t" style="left:28px;width:76px;top:4px;text-align:center;line-height:13px">Удалить все<br>ставки из ПН</div></div>
<div class="t" style="left:522px;top:295px">Поле добавления и редактирования пользовательского набора ставок.</div>
<div class="t" style="left:522px;top:308px">Разделитель: "+", внутри оператора gr() :"*", коментарии: "//"</div>
<div class="btn" style="left:860px;top:311px;width:86px;height:16px;line-height:14px">Очистить поле</div>
<div class="a" style="left:517px;top:329px;width:465px;height:57px;background:#C0DCC0;border:1px solid #7F9DB9"></div>
<div class="t" style="left:521px;top:332px;width:442px;overflow:hidden;line-height:13px;letter-spacing:-0.19px">//карепpавые+gr(2*3*5*6)+gr(8*9*11*12)+gr(14*15*17*18)+gr(20*21*23*24)+gr(26*27*29*30)<br>+gr(32*33*35*36)</div>
<div class="a" style="left:963px;top:330px;width:17px;height:55px;background:linear-gradient(90deg,#F3F3EF,#FDFDFB)"></div>
<div class="a" style="left:964px;top:331px;width:15px;height:16px;border:1px solid #E6E5DE;border-radius:2px;background:linear-gradient(90deg,#F4F3EE,#EAE8DF)"><svg class="a" style="left:2px;top:4px" width="9" height="7"><path d="M1 5.5L4.5 2L8 5.5" fill="none" stroke="#C8C6BA" stroke-width="2"/></svg></div>
<div class="a" style="left:964px;top:368px;width:15px;height:16px;border:1px solid #E6E5DE;border-radius:2px;background:linear-gradient(90deg,#F4F3EE,#EAE8DF)"><svg class="a" style="left:2px;top:4px" width="9" height="7"><path d="M1 1.5L4.5 5L8 1.5" fill="none" stroke="#C8C6BA" stroke-width="2"/></svg></div>
<div class="grp" style="left:518px;top:393px;width:468px;height:41px"></div>
<div class="gt" style="left:522px;top:387px">Кнопки ускоренного заполнения строки ставок</div>
<div class="btn" style="left:525px;top:402px;width:22px;height:23px"><svg class="a" style="left:0;top:0" width="20" height="21" viewBox="0 0 20 21"><circle cx="10" cy="10.5" r="8.4" fill="#22EC55" stroke="#000" stroke-width="2.3"/><g transform="translate(0,0.5)"><text x="10" y="14.1" text-anchor="middle" font-family="Liberation Sans" font-size="11" fill="#000" stroke="#000" stroke-width="0.3" textLength="9" lengthAdjust="spacingAndGlyphs">1€</text></g></svg></div>
<div class="btn" style="left:549px;top:402px;width:22px;height:23px"><svg class="a" style="left:0;top:0" width="20" height="21" viewBox="0 0 20 21"><circle cx="10" cy="10.5" r="8.4" fill="#22EC55" stroke="#000" stroke-width="2.3"/><g transform="translate(0,0.5)"><text x="10" y="14.1" text-anchor="middle" font-family="Liberation Sans" font-size="11" fill="#000" stroke="#000" stroke-width="0.3" textLength="13" lengthAdjust="spacingAndGlyphs">10€</text></g></svg></div>
<div class="btn" style="left:573px;top:402px;width:22px;height:23px"><svg class="a" style="left:0;top:0" width="20" height="21" viewBox="0 0 20 21"><circle cx="10" cy="10.5" r="8.4" fill="#22EC55" stroke="#000" stroke-width="2.3"/><g transform="translate(0,0.5)"><text x="10" y="14.1" text-anchor="middle" font-family="Liberation Sans" font-size="11" fill="#000" stroke="#000" stroke-width="0.3" textLength="13" lengthAdjust="spacingAndGlyphs">25€</text></g></svg></div>
<div class="btn" style="left:597px;top:402px;width:22px;height:23px"><svg class="a" style="left:0;top:0" width="20" height="21" viewBox="0 0 20 21"><circle cx="10" cy="10.5" r="8.4" fill="#22EC55" stroke="#000" stroke-width="2.3"/><g transform="translate(0,0.5)"><text x="10" y="14.1" text-anchor="middle" font-family="Liberation Sans" font-size="11" fill="#000" stroke="#000" stroke-width="0.3" textLength="13" lengthAdjust="spacingAndGlyphs">50€</text></g></svg></div>
<div class="btn" style="left:621px;top:402px;width:22px;height:23px"><svg class="a" style="left:0;top:0" width="20" height="21" viewBox="0 0 20 21"><circle cx="10" cy="10.5" r="8.4" fill="#22EC55" stroke="#000" stroke-width="2.3"/><g transform="translate(0,0.5)"><text x="10" y="14.1" text-anchor="middle" font-family="Liberation Sans" font-size="11" fill="#000" stroke="#000" stroke-width="0.3" textLength="9" lengthAdjust="spacingAndGlyphs">1$</text></g></svg></div>
<div class="a" style="left:645px;top:402px;width:22px;height:23px;border:1px solid #E2E0D6;border-radius:3px;background:#F5F4EE"><svg class="a" style="left:0;top:0" width="20" height="21" viewBox="0 0 20 21"><circle cx="10" cy="10.5" r="8.3" fill="#F4F4F0" stroke="#CBC9BD" stroke-width="1.8"/><text x="10" y="14.5" text-anchor="middle" font-family="Liberation Sans" font-size="11" fill="#C4C2B6" textLength="11" lengthAdjust="spacingAndGlyphs">5$</text></svg></div>
<div class="btn" style="left:677px;top:402px;width:22px;height:23px"><svg class="a" style="left:0;top:0" width="20" height="21" viewBox="0 0 20 21"><circle cx="10" cy="10.5" r="8.4" fill="#22EC55" stroke="#000" stroke-width="2.3"/><g transform="translate(0,0.5)"><text x="10" y="14.1" text-anchor="middle" font-family="Liberation Sans" font-size="11" fill="#000" stroke="#000" stroke-width="0.3" textLength="10" lengthAdjust="spacingAndGlyphs">0$</text></g></svg></div>
<div class="btn" style="left:733px;top:402px;width:22px;height:23px"><svg class="a" style="left:0;top:0" width="20" height="21" viewBox="0 0 20 21"><circle cx="10" cy="10.5" r="8.4" fill="#22EC55" stroke="#000" stroke-width="2.3"/><g transform="translate(0,0.5)"><path d="M8 5L14.5 10L8 15Z" fill="#A02090"/></g></svg></div>
<div class="btn" style="left:757px;top:402px;width:22px;height:23px"><svg class="a" style="left:0;top:0" width="20" height="21" viewBox="0 0 20 21"><circle cx="10" cy="10.5" r="8.4" fill="#22EC55" stroke="#000" stroke-width="2.3"/><g transform="translate(0,0.5)"><path d="M8.5 14.5Q5 12 6.5 8Q9 5 12.5 6.5" fill="none" stroke="#C040C0" stroke-width="1.8"/><path d="M10.5 4.5L14.5 7L11 9.5z" fill="#C040C0"/><path d="M14 8.5Q15 12 11 14" fill="none" stroke="#C040C0" stroke-width="1.5"/></g></svg></div>
<div class="btn" style="left:781px;top:402px;width:22px;height:23px"><svg class="a" style="left:0;top:0" width="20" height="21" viewBox="0 0 20 21"><circle cx="10" cy="10.5" r="8.4" fill="#22EC55" stroke="#000" stroke-width="2.3"/><g transform="translate(0,0.5)"><path d="M5 12L10 8.5L13 12.5L9.5 15.5z" fill="#E030D8"/><path d="M9 9.5L14.5 5" stroke="#2A3AD0" stroke-width="2.6"/><path d="M6 10L11 6.5" stroke="#2A3AD0" stroke-width="1.6"/></g></svg></div>
<div class="btn" style="left:829px;top:402px;width:22px;height:23px"><svg class="a" style="left:0;top:0" width="20" height="21" viewBox="0 0 20 21"><circle cx="10" cy="10.5" r="8.4" fill="#22EC55" stroke="#000" stroke-width="2.3"/><g transform="translate(0,0.5)"><path d="M6 6.5h2M6 6.5v2M14 6.5h-2M14 6.5v2M6 14.5h2M6 14.5v-2M14 14.5h-2M14 14.5v-2" stroke="#2040E0" stroke-width="1.5"/><path d="M8 8.5l1.2 1.2M12 8.5l-1.2 1.2M8 12.5l1.2-1.2M12 12.5l-1.2-1.2" stroke="#000" stroke-width="0.8"/><circle cx="10" cy="10.5" r="1.1" fill="#E02020"/></g></svg></div>
<div class="a" style="left:516px;top:439px;width:469px;height:134px;border:1px solid #7F9DB9;background:#A4A0A0;overflow:hidden">
<div class="a" style="left:0;top:0;width:467px;height:16px;background:#316AC5;outline:1px dotted #F0C060;outline-offset:-1px"></div>
<div class="t" style="left:2px;top:0;font-size:13px;line-height:16px;color:#fff">//карепpавые+gr(2*3*5*6)+gr(8*9*11*12)+gr(14*15*17*18)+gr(20*21*23*24)+gr(26*27*29*30)</div>
<div class="a" style="left:0;top:16px;width:467px;height:1px;background:#000080"></div>
<div class="a" style="left:0;top:17px;width:467px;height:16px;background:#C0DCC0"></div>
<div class="t" style="left:2px;top:17px;font-size:13px;line-height:16px;color:#000">//карелевые+gr(1*2*4*5)+gr(7*8*10*11)+gr(13*14*16*17)+gr(19*20*23*22)+gr(25*26*28*29)</div>
<div class="a" style="left:0;top:33px;width:467px;height:1px;background:#000080"></div>
<div class="a" style="left:0;top:50px;width:467px;height:1px;background:#000080"></div>
<div class="a" style="left:0;top:67px;width:467px;height:1px;background:#000080"></div>
<div class="a" style="left:0;top:84px;width:467px;height:1px;background:#000080"></div>
<div class="a" style="left:0;top:101px;width:467px;height:1px;background:#000080"></div>
<div class="a" style="left:0;top:116px;width:467px;height:16px;background:#FDFDFA"></div>
<div class="a" style="left:0;top:116px;width:16px;height:16px;border:1px solid #fff;border-radius:2px;background:linear-gradient(#C8D6FB,#B9CCF8 50%,#B0C4F5)"><svg class="a" style="left:4px;top:3px" width="7" height="9"><path d="M5 1L1.5 4.5L5 8" fill="none" stroke="#4D6185" stroke-width="2"/></svg></div>
<div class="a" style="left:17px;top:116px;width:389px;height:16px;border:1px solid #fff;border-radius:2px;background:linear-gradient(#C8D6FB,#BACDF8 50%,#B2C6F6)"><div class="a" style="left:187px;top:4px;width:8px;height:7px;background:repeating-linear-gradient(90deg,#EEF3FE 0 1px,#8FA8E0 1px 2px)"></div></div>
<div class="a" style="left:451px;top:116px;width:16px;height:16px;border:1px solid #fff;border-radius:2px;background:linear-gradient(#C8D6FB,#B9CCF8 50%,#B0C4F5)"><svg class="a" style="left:4px;top:3px" width="7" height="9"><path d="M1.5 1L5 4.5L1.5 8" fill="none" stroke="#4D6185" stroke-width="2"/></svg></div>
</div>
<div class="a" style="left:503px;top:585px;width:512px;height:1px;background:#ACA899"></div>
<div class="a" style="left:503px;top:586px;width:512px;height:1px;background:#fff"></div>
<div class="a" style="left:503px;top:607px;width:510px;height:136px;background:#FCFCFE;border:1px solid #919B9C"></div>
<div class="a" style="left:505px;top:589px;width:219px;height:18px;background:linear-gradient(#FFFFFF,#F3F3EF 50%,#ECEAE0);border:1px solid #919B9C;border-bottom:none;border-radius:3px 3px 0 0;overflow:hidden"><div class="t" style="left:0;width:100%;text-align:center;top:3px;font-size:11px">Частота - Zero, шансы, дюжины, колонки</div></div>
<div class="a" style="left:726px;top:589px;width:158px;height:18px;background:linear-gradient(#FFFFFF,#F3F3EF 50%,#ECEAE0);border:1px solid #919B9C;border-bottom:none;border-radius:3px 3px 0 0;overflow:hidden"><div class="t" style="left:0;width:100%;text-align:center;top:3px;font-size:11px">Частота - сиклайны, сектора</div></div>
<div class="a" style="left:883px;top:587px;width:46px;height:21px;background:#FCFCFE;border:1px solid #919B9C;border-bottom:none;border-radius:3px 3px 0 0;border-top:3px solid #F9B232;z-index:2"><div class="t" style="left:0;width:100%;text-align:center;top:2px;font-size:12px">MD5</div></div>
<div class="btn" style="left:508px;top:617px;width:71px;height:90px;line-height:13px;padding-top:26px">Очистка<br>Вставка<br>Расчет MD5</div>
<div class="btn" style="left:583px;top:617px;width:79px;height:18px;line-height:16px">Очистить</div>
<div class="btn" style="left:583px;top:641px;width:79px;height:31px;line-height:13px;padding-top:3px">Очистить и<br>вставить</div>
<div class="btn" style="left:583px;top:676px;width:79px;height:31px;line-height:30px">Расчет MD5</div>
<div class="btn" style="left:511px;top:712px;width:148px;height:28px;line-height:13px;padding-top:2px">Очистить и&nbsp; вставить<br>во вспом. строку</div>
<div class="t" style="left:667px;top:612px">Исходная строка</div>
<div class="edit" style="left:667px;top:627px;width:285px;height:21px"></div>
<div class="t" style="left:667px;top:656px">Выходная строка MD5</div>
<div class="a" style="left:803px;top:653px;width:13px;height:13px;border:1px solid #1C5180;background:linear-gradient(135deg,#DCDCD7,#fff)"></div>
<div class="t" style="left:820px;top:654px">регистр&nbsp; - маленький</div>
<div class="edit" style="left:667px;top:672px;width:285px;height:21px"></div>
<div class="t" style="left:667px;top:697px">Вспомогательная строка: сюда можно все скопировать</div>
<div class="edit" style="left:667px;top:712px;width:285px;height:21px"></div>
<div class="btn" style="left:956px;top:628px;width:23px;height:24px"><svg class="a" style="left:1px;top:1px" width="20" height="20" viewBox="0 0 20 20"><circle cx="10" cy="10" r="8.6" fill="#22EC55" stroke="#000" stroke-width="2.2"/><text x="10" y="10" text-anchor="middle" font-family="Liberation Sans" font-size="7.5" textLength="9" lengthAdjust="spacingAndGlyphs" fill="#000">MA</text><text x="7.5" y="15.8" text-anchor="middle" font-family="Liberation Sans" font-size="7.5" fill="#000">5</text></svg></div>
<div class="btn" style="left:956px;top:708px;width:23px;height:24px"><svg class="a" style="left:1px;top:1px" width="20" height="20" viewBox="0 0 20 20"><circle cx="10" cy="10" r="8.6" fill="#22EC55" stroke="#000" stroke-width="2.2"/><text x="10" y="10" text-anchor="middle" font-family="Liberation Sans" font-size="7.5" textLength="9" lengthAdjust="spacingAndGlyphs" fill="#000">MA</text><text x="7.5" y="15.8" text-anchor="middle" font-family="Liberation Sans" font-size="7.5" fill="#000">5</text><path d="M9.5 10.5l4.5 3-4.5 3.5z" fill="#2040F0"/></svg></div>
</body></html>
